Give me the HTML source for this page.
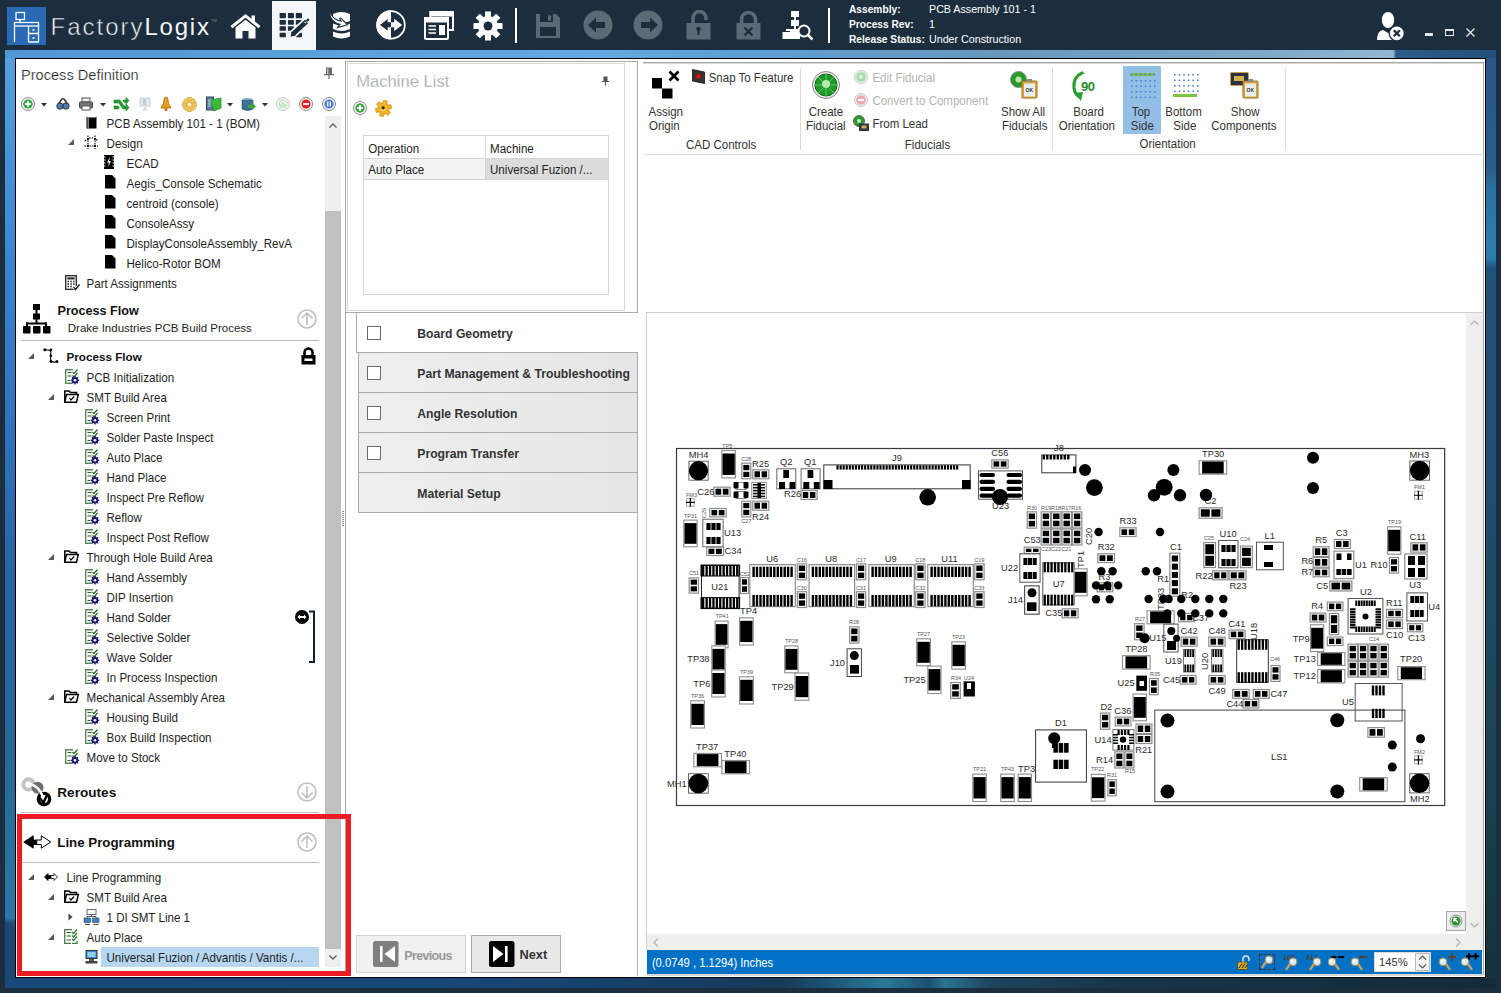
<!DOCTYPE html>
<html><head><meta charset="utf-8">
<style>
*{margin:0;padding:0;box-sizing:border-box}
html,body{width:1501px;height:993px;overflow:hidden;background:#1c2e3d;font-family:"Liberation Sans",sans-serif;color:#1e1e1e}
.a{position:absolute}
.t{position:absolute;white-space:nowrap;line-height:1}
svg{position:absolute;overflow:visible}
</style></head><body>
<div class="a" style="left:5px;top:50px;width:1491px;height:938px;background:linear-gradient(180deg,#4f96d6 0%,#2f6eae 40%,#1c5288 70%,#174a7a 100%)"></div>
<div class="a" style="left:1100px;top:58px;width:396px;height:930px;background:linear-gradient(180deg,#28568a 0%,#2a5e90 12%,#2a72a0 14%,#2c80ae 21.5%,#20527e 22.6%,#1f4e74 45%,#1c4a60 60%,#1a4453 75%,#163a47 88%,#15323e 100%)"></div>
<div class="a" style="left:5px;top:58px;width:10px;height:930px;background:linear-gradient(180deg,#55a0e0 0%,#3b84d2 22%,#2f72bc 40%,#2a64a8 55%,#276898 75%,#2a76a6 92.5%,#1b4a74 93%,#184670 100%)"></div>
<div class="a" style="left:5px;top:50px;width:1491px;height:8px;background:linear-gradient(90deg,#4f96d6 0%,#62aadf 40%,#5c9ed4 50%,#6898bc 67%,#80a8c8 85%,#92b8d4 93.1%,#2e5c88 93.3%,#24507a 100%)"></div>
<div class="a" style="left:5px;top:978px;width:1491px;height:10px;background:linear-gradient(90deg,#184b7b 0%,#174676 33%,#163a5a 52%,#1c5272 55%,#2a7898 59%,#1c5070 62%,#2a7494 63%,#1d4660 66%,#163448 75%,#132b3a 100%)"></div>
<div class="a" style="left:15px;top:58px;width:1471px;height:920px;border:1px solid #000;background:#fff"></div>
<!-- TOP BAR -->
<div class="a" style="left:7px;top:7px;width:39px;height:38px;background:#2a6ab5"></div>
<svg style="left:7px;top:7px" width="39" height="38" viewBox="0 0 39 38" fill="none" stroke="#fff" stroke-width="1.3">
<rect x="9" y="5.5" width="8.5" height="7"/><path d="M13 12.5v3"/><rect x="7.5" y="15.5" width="24" height="3.5"/>
<path d="M7.5 19v16M31.5 19v16M21.5 19v16M21.5 26.5h10M21.5 35h10"/><path d="M25.5 23h2M25.5 31h2"/></svg>
<svg style="left:50px;top:8px" width="170" height="34" viewBox="0 0 170 34" font-family="Liberation Sans, sans-serif" font-size="24">
<text x="0.6" y="27.2" letter-spacing="2" fill="#f0f3f6" stroke="#1c2e3d" stroke-width="0.55">Factory</text>
<text x="94.4" y="27.2" letter-spacing="1.8" fill="#f4f6f8">Logix</text></svg>
<div class="t" style="left:211px;top:19px;font-size:4px;color:#889">TM</div>
<!-- home -->
<svg style="left:230px;top:13px" width="31" height="26" viewBox="0 0 31 26"><path fill="#fff" d="M15.5 1 L0.5 13 L2.5 15.2 L15.5 4.8 L28.5 15.2 L30.5 13 L25 8.6 V2.5 H21.5 V5.8 Z M5.5 14.5 V25.5 H12.5 V18 H18.5 V25.5 H25.5 V14.5 L15.5 6.8 Z"/></svg>
<!-- selected grid -->
<div class="a" style="left:272px;top:1px;width:44px;height:49px;background:#f4f6f9"></div>
<svg style="left:279px;top:12px" width="31" height="27" viewBox="0 0 31 27"><g fill="#1c2e3d">
<rect x="0.6" y="0.9" width="6.3" height="5.3" rx="0.6"/><rect x="8.9" y="0.9" width="6" height="5.3" rx="0.6"/><rect x="16.8" y="0.9" width="6.2" height="5.3" rx="0.6"/>
<rect x="0.6" y="8.1" width="6.3" height="4.6" rx="0.6"/><rect x="8.9" y="8.1" width="6" height="4.6" rx="0.6"/><rect x="16.8" y="8.1" width="6.2" height="4.6" rx="0.6"/>
<rect x="0.6" y="14.3" width="6.3" height="4.5" rx="0.6"/><rect x="8.9" y="14.3" width="6" height="4.5" rx="0.6"/>
<rect x="0.6" y="20.8" width="6.3" height="4.4" rx="0.6"/><rect x="8.9" y="20.8" width="6" height="4.4" rx="0.6"/><rect x="16.8" y="20.8" width="6.2" height="4.4" rx="0.6"/></g>
<path d="M12 24 L28.8 8.2" stroke="#f4f6f9" stroke-width="8" stroke-linecap="round"/>
<path d="M13.5 22.5 L27.5 9.5" stroke="#1c2e3d" stroke-width="4.6"/>
<path d="M11.5 24.8 L12.8 19.5 L16.8 23.3 Z" fill="#1c2e3d"/>
<path d="M25.6 11.2 L27 9.8" stroke="#f4f6f9" stroke-width="1.2" transform="rotate(90 26.3 10.5)"/>
<path d="M26.8 8.5 L28.5 6.8 Q29.6 6.2 30.2 7.2 L30.3 8 L28.6 9.8Z" fill="#1c2e3d"/></svg>
<!-- db -->
<svg style="left:329px;top:11px" width="25" height="29" viewBox="0 0 25 29"><g fill="#fff">
<path d="M4 3 Q12.5 -1 21 3 V10 Q12.5 14 4 10 Z"/><path d="M4 12.5 Q12.5 16.5 21 12.5 V18 Q12.5 22 4 18 Z"/><path d="M4 20.5 Q12.5 24.5 21 20.5 V25.5 Q12.5 29.5 4 25.5 Z"/></g>
<path d="M1 2 Q3 9 13 11 L11 7 L17.5 13.5 L10 15.5 L12 13 Q2 11 1 2Z" fill="#1c2e3d" stroke="#1c2e3d" stroke-width="2.2"/>
<path d="M1 2 Q3 9 13 11 L11 7 L17.5 13.5 L10 15.5 L12 13 Q2 11 1 2Z" fill="#fff"/></svg>
<!-- circle arrows -->
<svg style="left:376px;top:10px" width="30" height="30" viewBox="0 0 30 30">
<circle cx="15" cy="14.9" r="13.8" fill="#1c2e3d" stroke="#fff" stroke-width="1.8"/>
<path d="M15 0.2 A14.7 14.7 0 0 0 15 29.6 Z" fill="#fff"/>
<path d="M4 14.9 L11.7 8.9 V12.3 H15 V17.2 H11.7 V20.8 Z" fill="#1c2e3d"/>
<path d="M26.2 14.9 L18.2 8.7 V12.3 H15 V17.2 H18.2 V21 Z" fill="#fff"/></svg>
<!-- windows -->
<svg style="left:424px;top:10px" width="31" height="30" viewBox="0 0 31 30" fill="none" stroke="#fff" stroke-width="2">
<path d="M6.5 7 V2 H29 V20 H25" /><path d="M6.5 2 H29 V5.5 H6.5Z" fill="#fff"/>
<rect x="1" y="8" width="23" height="21" rx="1"/><path d="M1 8 H24 V11.5 H1Z" fill="#fff"/>
<path d="M4.5 16 H12 M4.5 19.5 H12 M4.5 23 H12" stroke-width="1.6"/><rect x="15" y="15" width="6" height="10" fill="#fff" stroke="none"/></svg>
<!-- gear -->
<svg style="left:473px;top:11px" width="30" height="30" viewBox="0 0 30 30"><g fill="#fff" transform="translate(15 15)">
<circle r="10"/><g id="teeth"><rect x="-3" y="-14.5" width="6" height="6"/><rect x="-3" y="8.5" width="6" height="6"/><rect x="-14.5" y="-3" width="6" height="6"/><rect x="8.5" y="-3" width="6" height="6"/></g>
<g transform="rotate(45)"><rect x="-3" y="-14.5" width="6" height="6"/><rect x="-3" y="8.5" width="6" height="6"/><rect x="-14.5" y="-3" width="6" height="6"/><rect x="8.5" y="-3" width="6" height="6"/></g>
<circle r="4.5" fill="#1c2e3d"/></g></svg>
<div class="a" style="left:515px;top:8px;width:2px;height:35px;background:#fff"></div>
<!-- save -->
<svg style="left:535px;top:13px" width="26" height="26" viewBox="0 0 26 26"><path fill="#5a6b77" d="M1 1 H21 L25 5 V25 H1Z"/><rect x="5" y="1" width="13" height="8" fill="#1c2e3d"/><rect x="13" y="2.5" width="3" height="5" fill="#5a6b77"/><rect x="5" y="14" width="16" height="9" fill="#1c2e3d"/></svg>
<!-- back/fwd -->
<svg style="left:583px;top:10px" width="30" height="30" viewBox="0 0 30 30"><circle cx="15" cy="15" r="14.5" fill="#5a6b77"/><path fill="#1c2e3d" d="M5 15 L13 7.5 V12 H22 V18 H13 V22.5Z"/></svg>
<svg style="left:633px;top:10px" width="30" height="30" viewBox="0 0 30 30"><circle cx="15" cy="15" r="14.5" fill="#5a6b77"/><path fill="#1c2e3d" d="M25 15 L17 7.5 V12 H8 V18 H17 V22.5Z"/></svg>
<!-- unlock -->
<svg style="left:686px;top:10px" width="25" height="30" viewBox="0 0 25 30"><path d="M7 14 V8 A6.5 6.5 0 0 1 20 8 V10" fill="none" stroke="#5a6b77" stroke-width="3.5"/><rect x="0.5" y="13" width="24" height="16.5" fill="#5a6b77"/><circle cx="12.5" cy="19" r="2.3" fill="#1c2e3d"/><rect x="11.5" y="19" width="2" height="6" fill="#1c2e3d"/></svg>
<!-- lock x -->
<svg style="left:736px;top:10px" width="25" height="30" viewBox="0 0 25 30"><path d="M5.5 14 V9.5 A7 7 0 0 1 19.5 9.5 V14" fill="none" stroke="#5a6b77" stroke-width="3.5"/><rect x="0.5" y="13" width="24" height="16.5" fill="#5a6b77"/><path d="M8.5 17.5 L16.5 25.5 M16.5 17.5 L8.5 25.5" stroke="#1c2e3d" stroke-width="2.4"/></svg>
<!-- hierarchy search -->
<svg style="left:782px;top:10px" width="32" height="31" viewBox="0 0 32 31"><g fill="#fff"><rect x="9" y="1" width="8" height="6"/><rect x="12" y="7" width="2" height="3"/><rect x="9" y="10" width="8" height="6"/><rect x="12" y="16" width="2" height="3"/>
<rect x="0.5" y="22" width="8" height="7"/><rect x="8" y="19" width="10" height="10"/><rect x="4" y="19" width="12" height="2"/></g>
<circle cx="22" cy="21" r="5.5" fill="#1c2e3d" stroke="#fff" stroke-width="2"/><path d="M26 25 L30.5 29.5" stroke="#fff" stroke-width="2.5"/></svg>
<div class="a" style="left:828px;top:8px;width:2px;height:35px;background:#fff"></div>
<!-- assembly info -->
<div class="t" style="left:849px;top:1.6px;font-size:10.2px;font-weight:bold;color:#fff;line-height:15.25px">Assembly:<br>Process Rev:<br>Release Status:</div>
<div class="t" style="left:929px;top:1.6px;font-size:10.7px;color:#fff;line-height:15.25px">PCB Assembly 101 - 1<br>1<br>Under Construction</div>
<!-- user -->
<svg style="left:1377px;top:12px" width="28" height="29" viewBox="0 0 28 29"><g fill="#fff"><ellipse cx="11" cy="8" rx="6.2" ry="8"/><path d="M0 28 Q0 19 6 18 L11 21 L16 18 Q20 19 21 23 L21 28Z"/></g>
<circle cx="19.8" cy="21.3" r="7.6" fill="#fff" stroke="#1c2e3d" stroke-width="1.4"/><path d="M16.8 18.3 L22.8 24.3 M22.8 18.3 L16.8 24.3" stroke="#1c2e3d" stroke-width="2.3"/></svg>
<div class="a" style="left:1425px;top:33px;width:8px;height:3px;background:#e8e8e8"></div>
<div class="a" style="left:1445px;top:29px;width:9px;height:7px;border:1.3px solid #e8e8e8;border-top-width:2px"></div>
<svg style="left:1466px;top:28px" width="9" height="9" viewBox="0 0 9 9"><path d="M0.5 0.5 L8.5 8.5 M8.5 0.5 L0.5 8.5" stroke="#e8e8e8" stroke-width="1.3"/></svg>

<svg style="left:20px;top:64px" width="130" height="22" viewBox="0 0 130 22"><text x="1" y="16.2" font-size="14.6" font-family="Liberation Sans, sans-serif" fill="#2a2a2a" stroke="#fff" stroke-width="0.2">Process Definition</text></svg>
<svg style="left:324px;top:67px" width="10" height="12" viewBox="0 0 10 12"><path d="M2 0.5 H8 V7 H10 V8.2 H5.6 V12 H4.4 V8.2 H0 V7 H2 Z" fill="#6b6b6b"/><rect x="3.3" y="1.5" width="1" height="5.5" fill="#ddd"/></svg>
<svg style="left:21px;top:97px" width="14" height="14" viewBox="0 0 14 14"><circle cx="7" cy="7" r="6.5" fill="#f4f4f4" stroke="#8a8a8a" stroke-width="1"/><circle cx="7" cy="7" r="4.6" fill="#2eaa3a"/><path d="M7 4 V10 M4 7 H10" stroke="#fff" stroke-width="1.8"/></svg>
<svg style="left:41px;top:103px" width="7" height="4" viewBox="0 0 7 4"><path d="M0 0 H6 L3 3.5Z" fill="#333"/></svg>
<svg style="left:56px;top:98px" width="14" height="12" viewBox="0 0 14 12"><g fill="#4a80b0" stroke="#333" stroke-width="1"><ellipse cx="4" cy="8" rx="3.2" ry="3.2"/><ellipse cx="10" cy="8" rx="3.2" ry="3.2"/></g><path d="M3 5 L6 1 H8 L11 5" fill="none" stroke="#333" stroke-width="1.5"/></svg>
<svg style="left:79px;top:97px" width="14" height="14" viewBox="0 0 14 14"><rect x="3" y="1" width="8" height="4" fill="#eee" stroke="#555"/><rect x="0.5" y="5" width="13" height="6" rx="1" fill="#777" stroke="#444"/><rect x="3" y="9" width="8" height="4" fill="#fff" stroke="#555"/></svg>
<svg style="left:100px;top:103px" width="7" height="4" viewBox="0 0 7 4"><path d="M0 0 H6 L3 3.5Z" fill="#333"/></svg>
<svg style="left:114px;top:97px" width="15" height="14" viewBox="0 0 15 14"><path d="M0 3 H6 L10 9 H12 V7 L15 10.5 L12 14 V12 H9 L5 6 H0Z M0 9 H4 L5.5 11 L4 12 H0Z M9 3 H12 V0.5 L15 3.5 L12 7 V5.5 H10Z" fill="#22a030" stroke="#167a20" stroke-width="0.6"/></svg>
<svg style="left:139px;top:97px" width="12" height="15" viewBox="0 0 12 15"><rect x="1" y="1" width="10" height="8" fill="#e2e8ee" stroke="#c8d0d8"/><rect x="4" y="2" width="3" height="6" fill="#c0cad4"/><path d="M6 9 V14 M3 14 L6 11 L9 14" stroke="#ccc" fill="none"/></svg>
<svg style="left:160px;top:96px" width="12" height="16" viewBox="0 0 12 16"><path d="M6 1 Q8 1 8 4 Q8 8 10 10 L11 12 H1 L2 10 Q4 8 4 4 Q4 1 6 1Z" fill="#e8a020" stroke="#a86010" stroke-width="0.8"/><circle cx="6" cy="13.5" r="1.5" fill="#c07010"/></svg>
<svg style="left:182px;top:97px" width="15" height="15" viewBox="0 0 15 15"><g transform="translate(7.5 7.5)" fill="#f0c860" stroke="#d8a840" stroke-width="0.8"><circle r="5"/><rect x="-1.8" y="-7" width="3.6" height="14"/><rect x="-7" y="-1.8" width="14" height="3.6"/><rect x="-1.8" y="-7" width="3.6" height="14" transform="rotate(45)"/><rect x="-1.8" y="-7" width="3.6" height="14" transform="rotate(-45)"/><circle r="2.2" fill="#fff5d0"/></g></svg>
<svg style="left:206px;top:96px" width="16" height="16" viewBox="0 0 16 16"><rect x="0.5" y="1" width="7" height="13" fill="#5a7a9a" stroke="#345"/><path d="M4 4 L15 2 V12 L8 15 Z" fill="#3cb83c" stroke="#2a8a2a" stroke-width="0.8"/><rect x="2" y="3" width="3" height="8" fill="#8ab"/></svg>
<svg style="left:227px;top:103px" width="7" height="4" viewBox="0 0 7 4"><path d="M0 0 H6 L3 3.5Z" fill="#333"/></svg>
<svg style="left:241px;top:97px" width="15" height="15" viewBox="0 0 15 15"><ellipse cx="6.5" cy="3" rx="5.5" ry="2" fill="#7aa6c8"/><path d="M1 3 V12 Q6.5 15 12 12 V3" fill="#3f6e96" stroke="#2a4a6a" stroke-width="0.6"/><path d="M7 8 H11 V5.5 L15 9.5 L11 13 V11 H7Z" fill="#3aa83a"/></svg>
<svg style="left:262px;top:103px" width="7" height="4" viewBox="0 0 7 4"><path d="M0 0 H6 L3 3.5Z" fill="#333"/></svg>
<svg style="left:276px;top:97px" width="14" height="14" viewBox="0 0 14 14"><circle cx="7" cy="7" r="6.5" fill="#f4f4f4" stroke="#c8c8c8" stroke-width="1"/><circle cx="7" cy="7" r="4.6" fill="#c8e8c8"/><path d="M4.5 7 A2.5 2.5 0 0 1 9.5 7" fill="none" stroke="#fff" stroke-width="1.2"/></svg>
<svg style="left:299px;top:97px" width="14" height="14" viewBox="0 0 14 14"><circle cx="7" cy="7" r="6.5" fill="#f4f4f4" stroke="#8a8a8a" stroke-width="1"/><circle cx="7" cy="7" r="4.6" fill="#e02030"/><path d="M4 7 H10" stroke="#fff" stroke-width="1.8"/></svg>
<svg style="left:322px;top:97px" width="14" height="14" viewBox="0 0 14 14"><circle cx="7" cy="7" r="6.5" fill="#f4f4f4" stroke="#8a8a8a" stroke-width="1"/><circle cx="7" cy="7" r="4.6" fill="#4a7ad8"/><path d="M5.7 4.5 V9.5 M8.3 4.5 V9.5" stroke="#fff" stroke-width="1.3"/></svg>
<div class="a" style="left:325px;top:116px;width:16px;height:851px;background:#efefef"></div>
<div class="a" style="left:325px;top:211px;width:16px;height:738px;background:#c0c0c0"></div>
<svg style="left:329px;top:123px" width="8" height="5" viewBox="0 0 8 5"><path d="M0.5 4.5 L4 1 L7.5 4.5" fill="none" stroke="#606060" stroke-width="1.3"/></svg>
<svg style="left:329px;top:955px" width="8" height="5" viewBox="0 0 8 5"><path d="M0.5 0.5 L4 4 L7.5 0.5" fill="none" stroke="#606060" stroke-width="1.3"/></svg>
<svg style="left:86px;top:116px" width="11" height="13" viewBox="0 0 11 13"><path d="M0.5 0.5 L1.5 1.5 H9.5 L10.5 0.5 V12.5 H0.5Z" fill="#000"/><rect x="1.7" y="2" width="0.8" height="10" fill="#fff"/></svg>
<div class="t" style="left:106.6px;top:117.78px;font-size:11.6px;color:#1e1e1e;transform:scaleY(1.08);transform-origin:0 9.82px;">PCB Assembly 101 - 1 (BOM)</div>
<svg style="left:68px;top:139px" width="6" height="6" viewBox="0 0 6 6"><path d="M6 0 V6 H0 Z" fill="#595959"/></svg>
<svg style="left:84px;top:135px" width="14" height="14" viewBox="0 0 14 14"><g stroke="#000" stroke-width="1.1" stroke-dasharray="1.6 0.9" fill="none"><path d="M4 0.5 V14 M11 0.5 V14 M0.5 11 H14"/><path d="M1 6 Q7.5 -0.5 14 6"/></g><g fill="#000"><circle cx="4" cy="4" r="1"/><circle cx="11" cy="4" r="1"/><circle cx="4" cy="11" r="1.1"/><circle cx="11" cy="11" r="1.1"/></g></svg>
<div class="t" style="left:106.6px;top:137.78px;font-size:11.6px;color:#1e1e1e;transform:scaleY(1.08);transform-origin:0 9.82px;">Design</div>
<svg style="left:104px;top:155px" width="10" height="14" viewBox="0 0 10 14"><path d="M0 0 H10 V14 H0Z" fill="#000"/><path d="M0 2 H1.5 M0 5 H1.5 M0 8 H1.5 M0 11 H1.5 M8.5 2 H10 M8.5 5 H10 M8.5 8 H10 M8.5 11 H10" stroke="#fff" stroke-width="1"/><path d="M6 2 L3 7.5 H5 L4 12 L7 6 H5Z" fill="#fff"/></svg>
<div class="t" style="left:126.5px;top:157.78px;font-size:11.6px;color:#1e1e1e;transform:scaleY(1.08);transform-origin:0 9.82px;">ECAD</div>
<svg style="left:105px;top:175px" width="11" height="14" viewBox="0 0 11 14"><path d="M0 0 H7 L10.5 3.5 V13.5 H0 Z" fill="#000"/></svg>
<div class="t" style="left:126.5px;top:177.78px;font-size:11.6px;color:#1e1e1e;transform:scaleY(1.08);transform-origin:0 9.82px;">Aegis_Console Schematic</div>
<svg style="left:105px;top:195px" width="11" height="14" viewBox="0 0 11 14"><path d="M0 0 H7 L10.5 3.5 V13.5 H0 Z" fill="#000"/></svg>
<div class="t" style="left:126.5px;top:197.78px;font-size:11.6px;color:#1e1e1e;transform:scaleY(1.08);transform-origin:0 9.82px;">centroid (console)</div>
<svg style="left:105px;top:215px" width="11" height="14" viewBox="0 0 11 14"><path d="M0 0 H7 L10.5 3.5 V13.5 H0 Z" fill="#000"/></svg>
<div class="t" style="left:126.5px;top:217.78px;font-size:11.6px;color:#1e1e1e;transform:scaleY(1.08);transform-origin:0 9.82px;">ConsoleAssy</div>
<svg style="left:105px;top:235px" width="11" height="14" viewBox="0 0 11 14"><path d="M0 0 H7 L10.5 3.5 V13.5 H0 Z" fill="#000"/></svg>
<div class="t" style="left:126.5px;top:237.78px;font-size:11.6px;color:#1e1e1e;transform:scaleY(1.08);transform-origin:0 9.82px;">DisplayConsoleAssembly_RevA</div>
<svg style="left:105px;top:255px" width="11" height="14" viewBox="0 0 11 14"><path d="M0 0 H7 L10.5 3.5 V13.5 H0 Z" fill="#000"/></svg>
<div class="t" style="left:126.5px;top:257.78px;font-size:11.6px;color:#1e1e1e;transform:scaleY(1.08);transform-origin:0 9.82px;">Helico-Rotor BOM</div>
<svg style="left:65px;top:275px" width="15" height="16" viewBox="0 0 15 16"><rect x="0.7" y="0.7" width="10.6" height="13.6" fill="#fff" stroke="#222" stroke-width="1.3"/><rect x="2.3" y="2.3" width="7.4" height="2.2" fill="#333"/><path d="M2.5 6.5 H4 M5.3 6.5 H6.8 M8 6.5 H9.5 M2.5 9 H4 M5.3 9 H6.8 M8 9 H9.5 M2.5 11.5 H4 M5.3 11.5 H6.8" stroke="#222" stroke-width="1.3"/><path d="M8.5 12 L10.5 14.5 L14.5 9.5" fill="none" stroke="#fff" stroke-width="3"/><path d="M8.5 12 L10.5 14.5 L14.5 9.5" fill="none" stroke="#222" stroke-width="1.5"/></svg>
<div class="t" style="left:86.5px;top:277.78px;font-size:11.6px;color:#1e1e1e;transform:scaleY(1.08);transform-origin:0 9.82px;">Part Assignments</div>
<svg style="left:23px;top:304px" width="28" height="30" viewBox="0 0 28 30"><g fill="#000"><rect x="10" y="0" width="7" height="6"/><rect x="10" y="9.5" width="7" height="6"/><rect x="12.5" y="5" width="2" height="5"/><rect x="12.5" y="15" width="2" height="4"/><rect x="3" y="18.5" width="21" height="2"/><rect x="3" y="18.5" width="2" height="4"/><rect x="22" y="18.5" width="2" height="4"/><rect x="0" y="22" width="7.5" height="7.5" rx="0.8"/><rect x="10" y="22" width="7.5" height="7.5" rx="0.8"/><rect x="20" y="22" width="7.5" height="7.5" rx="0.8"/></g></svg>
<div class="t" style="left:57.5px;top:305.13px;font-size:12.6px;font-weight:bold;color:#111;">Process Flow</div>
<div class="t" style="left:67.8px;top:322.87px;font-size:11.5px;color:#1e1e1e;">Drake Industries PCB Build Process</div>
<svg style="left:297px;top:309px" width="20" height="20" viewBox="0 0 20 20"><circle cx="10" cy="10" r="9" fill="none" stroke="#bdbdbd" stroke-width="1.5"/><path d="M10 16 V4 M4.5 9.5 L10 4 L15.5 9.5" fill="none" stroke="#bdbdbd" stroke-width="1.5"/></svg>
<div class="a" style="left:21px;top:340px;width:298px;height:1px;background:#bcbcbc"></div>
<svg style="left:28px;top:353px" width="6" height="6" viewBox="0 0 6 6"><path d="M6 0 V6 H0 Z" fill="#595959"/></svg>
<svg style="left:43px;top:348px" width="16" height="16" viewBox="0 0 16 16"><path d="M1.8 1.8 Q6 1.2 7.9 3.5 Q7 8 7.9 13.2 Q10.5 14.8 13.9 13.5" fill="none" stroke="#000" stroke-width="1.1"/><circle cx="1.8" cy="1.8" r="1.5"/><circle cx="7.9" cy="1.9" r="1.3"/><circle cx="7.9" cy="7.8" r="1.3"/><circle cx="7.9" cy="13.5" r="1.4"/><circle cx="13.9" cy="13.5" r="1.5"/></svg>
<div class="t" style="left:66.5px;top:350.90px;font-size:11.7px;font-weight:bold;color:#111;">Process Flow</div>
<svg style="left:301px;top:347px" width="15" height="18" viewBox="0 0 15 18"><path d="M3.5 8 V5.5 A4 4 0 0 1 11.5 5.5 V8" fill="none" stroke="#000" stroke-width="2.6"/><rect x="0.5" y="8" width="14" height="9.5" fill="#000"/><rect x="3.5" y="11.5" width="8" height="2.5" fill="#fff"/></svg>
<svg style="left:65px;top:369px" width="14" height="15" viewBox="0 0 14 15"><path d="M8 0.7 H0.7 V14.3 H7" fill="none" stroke="#5b8a5b" stroke-width="1.4"/><path d="M2.5 3.5 H6.5 M2.5 7 H6.5 M2.5 11.5 H5" stroke="#2e5e2e" stroke-width="1.1"/><path d="M7.5 3 L9 4.5 L12.5 0.5 M7.5 6.5 L9 8 L12.5 4" fill="none" stroke="#2e6e2e" stroke-width="1.3"/><circle cx="10" cy="11.3" r="3.3" fill="#1a1a70"/><circle cx="10" cy="11.3" r="1.4" fill="#fff"/><path d="M10 7 V15.6 M5.7 11.3 H14.3 M7 8.3 L13 14.3 M13 8.3 L7 14.3" stroke="#1a1a70" stroke-width="1.3"/><circle cx="10" cy="11.3" r="1.3" fill="#fff"/></svg>
<div class="t" style="left:86.5px;top:372.38px;font-size:11.6px;color:#1e1e1e;transform:scaleY(1.08);transform-origin:0 9.82px;">PCB Initialization</div>
<svg style="left:48px;top:394px" width="6" height="6" viewBox="0 0 6 6"><path d="M6 0 V6 H0 Z" fill="#595959"/></svg>
<svg style="left:64px;top:390px" width="15" height="13" viewBox="0 0 15 13"><path d="M0.8 12.2 V1 H5 L6.5 2.5 H12.5 V4.5" fill="none" stroke="#000" stroke-width="1.5"/><path d="M0.8 12.2 L2.5 4.5 H14.3 L12.5 12.2 Z" fill="#fff" stroke="#000" stroke-width="1.5"/><path d="M5.5 8 L7 10 L10 6.5" fill="none" stroke="#000" stroke-width="1.2"/></svg>
<div class="t" style="left:86.5px;top:392.38px;font-size:11.6px;color:#1e1e1e;transform:scaleY(1.08);transform-origin:0 9.82px;">SMT Build Area</div>
<svg style="left:85px;top:409px" width="14" height="15" viewBox="0 0 14 15"><path d="M8 0.7 H0.7 V14.3 H7" fill="none" stroke="#5b8a5b" stroke-width="1.4"/><path d="M2.5 3.5 H6.5 M2.5 7 H6.5 M2.5 11.5 H5" stroke="#2e5e2e" stroke-width="1.1"/><path d="M7.5 3 L9 4.5 L12.5 0.5 M7.5 6.5 L9 8 L12.5 4" fill="none" stroke="#2e6e2e" stroke-width="1.3"/><circle cx="10" cy="11.3" r="3.3" fill="#1a1a70"/><circle cx="10" cy="11.3" r="1.4" fill="#fff"/><path d="M10 7 V15.6 M5.7 11.3 H14.3 M7 8.3 L13 14.3 M13 8.3 L7 14.3" stroke="#1a1a70" stroke-width="1.3"/><circle cx="10" cy="11.3" r="1.3" fill="#fff"/></svg>
<div class="t" style="left:106.5px;top:412.38px;font-size:11.6px;color:#1e1e1e;transform:scaleY(1.08);transform-origin:0 9.82px;">Screen Print</div>
<svg style="left:85px;top:429px" width="14" height="15" viewBox="0 0 14 15"><path d="M8 0.7 H0.7 V14.3 H7" fill="none" stroke="#5b8a5b" stroke-width="1.4"/><path d="M2.5 3.5 H6.5 M2.5 7 H6.5 M2.5 11.5 H5" stroke="#2e5e2e" stroke-width="1.1"/><path d="M7.5 3 L9 4.5 L12.5 0.5 M7.5 6.5 L9 8 L12.5 4" fill="none" stroke="#2e6e2e" stroke-width="1.3"/><circle cx="10" cy="11.3" r="3.3" fill="#1a1a70"/><circle cx="10" cy="11.3" r="1.4" fill="#fff"/><path d="M10 7 V15.6 M5.7 11.3 H14.3 M7 8.3 L13 14.3 M13 8.3 L7 14.3" stroke="#1a1a70" stroke-width="1.3"/><circle cx="10" cy="11.3" r="1.3" fill="#fff"/></svg>
<div class="t" style="left:106.5px;top:432.38px;font-size:11.6px;color:#1e1e1e;transform:scaleY(1.08);transform-origin:0 9.82px;">Solder Paste Inspect</div>
<svg style="left:85px;top:449px" width="14" height="15" viewBox="0 0 14 15"><path d="M8 0.7 H0.7 V14.3 H7" fill="none" stroke="#5b8a5b" stroke-width="1.4"/><path d="M2.5 3.5 H6.5 M2.5 7 H6.5 M2.5 11.5 H5" stroke="#2e5e2e" stroke-width="1.1"/><path d="M7.5 3 L9 4.5 L12.5 0.5 M7.5 6.5 L9 8 L12.5 4" fill="none" stroke="#2e6e2e" stroke-width="1.3"/><circle cx="10" cy="11.3" r="3.3" fill="#1a1a70"/><circle cx="10" cy="11.3" r="1.4" fill="#fff"/><path d="M10 7 V15.6 M5.7 11.3 H14.3 M7 8.3 L13 14.3 M13 8.3 L7 14.3" stroke="#1a1a70" stroke-width="1.3"/><circle cx="10" cy="11.3" r="1.3" fill="#fff"/></svg>
<div class="t" style="left:106.5px;top:452.38px;font-size:11.6px;color:#1e1e1e;transform:scaleY(1.08);transform-origin:0 9.82px;">Auto Place</div>
<svg style="left:85px;top:469px" width="14" height="15" viewBox="0 0 14 15"><path d="M8 0.7 H0.7 V14.3 H7" fill="none" stroke="#5b8a5b" stroke-width="1.4"/><path d="M2.5 3.5 H6.5 M2.5 7 H6.5 M2.5 11.5 H5" stroke="#2e5e2e" stroke-width="1.1"/><path d="M7.5 3 L9 4.5 L12.5 0.5 M7.5 6.5 L9 8 L12.5 4" fill="none" stroke="#2e6e2e" stroke-width="1.3"/><circle cx="10" cy="11.3" r="3.3" fill="#1a1a70"/><circle cx="10" cy="11.3" r="1.4" fill="#fff"/><path d="M10 7 V15.6 M5.7 11.3 H14.3 M7 8.3 L13 14.3 M13 8.3 L7 14.3" stroke="#1a1a70" stroke-width="1.3"/><circle cx="10" cy="11.3" r="1.3" fill="#fff"/></svg>
<div class="t" style="left:106.5px;top:472.38px;font-size:11.6px;color:#1e1e1e;transform:scaleY(1.08);transform-origin:0 9.82px;">Hand Place</div>
<svg style="left:85px;top:489px" width="14" height="15" viewBox="0 0 14 15"><path d="M8 0.7 H0.7 V14.3 H7" fill="none" stroke="#5b8a5b" stroke-width="1.4"/><path d="M2.5 3.5 H6.5 M2.5 7 H6.5 M2.5 11.5 H5" stroke="#2e5e2e" stroke-width="1.1"/><path d="M7.5 3 L9 4.5 L12.5 0.5 M7.5 6.5 L9 8 L12.5 4" fill="none" stroke="#2e6e2e" stroke-width="1.3"/><circle cx="10" cy="11.3" r="3.3" fill="#1a1a70"/><circle cx="10" cy="11.3" r="1.4" fill="#fff"/><path d="M10 7 V15.6 M5.7 11.3 H14.3 M7 8.3 L13 14.3 M13 8.3 L7 14.3" stroke="#1a1a70" stroke-width="1.3"/><circle cx="10" cy="11.3" r="1.3" fill="#fff"/></svg>
<div class="t" style="left:106.5px;top:492.38px;font-size:11.6px;color:#1e1e1e;transform:scaleY(1.08);transform-origin:0 9.82px;">Inspect Pre Reflow</div>
<svg style="left:85px;top:509px" width="14" height="15" viewBox="0 0 14 15"><path d="M8 0.7 H0.7 V14.3 H7" fill="none" stroke="#5b8a5b" stroke-width="1.4"/><path d="M2.5 3.5 H6.5 M2.5 7 H6.5 M2.5 11.5 H5" stroke="#2e5e2e" stroke-width="1.1"/><path d="M7.5 3 L9 4.5 L12.5 0.5 M7.5 6.5 L9 8 L12.5 4" fill="none" stroke="#2e6e2e" stroke-width="1.3"/><circle cx="10" cy="11.3" r="3.3" fill="#1a1a70"/><circle cx="10" cy="11.3" r="1.4" fill="#fff"/><path d="M10 7 V15.6 M5.7 11.3 H14.3 M7 8.3 L13 14.3 M13 8.3 L7 14.3" stroke="#1a1a70" stroke-width="1.3"/><circle cx="10" cy="11.3" r="1.3" fill="#fff"/></svg>
<div class="t" style="left:106.5px;top:512.38px;font-size:11.6px;color:#1e1e1e;transform:scaleY(1.08);transform-origin:0 9.82px;">Reflow</div>
<svg style="left:85px;top:529px" width="14" height="15" viewBox="0 0 14 15"><path d="M8 0.7 H0.7 V14.3 H7" fill="none" stroke="#5b8a5b" stroke-width="1.4"/><path d="M2.5 3.5 H6.5 M2.5 7 H6.5 M2.5 11.5 H5" stroke="#2e5e2e" stroke-width="1.1"/><path d="M7.5 3 L9 4.5 L12.5 0.5 M7.5 6.5 L9 8 L12.5 4" fill="none" stroke="#2e6e2e" stroke-width="1.3"/><circle cx="10" cy="11.3" r="3.3" fill="#1a1a70"/><circle cx="10" cy="11.3" r="1.4" fill="#fff"/><path d="M10 7 V15.6 M5.7 11.3 H14.3 M7 8.3 L13 14.3 M13 8.3 L7 14.3" stroke="#1a1a70" stroke-width="1.3"/><circle cx="10" cy="11.3" r="1.3" fill="#fff"/></svg>
<div class="t" style="left:106.5px;top:532.38px;font-size:11.6px;color:#1e1e1e;transform:scaleY(1.08);transform-origin:0 9.82px;">Inspect Post Reflow</div>
<svg style="left:48px;top:554px" width="6" height="6" viewBox="0 0 6 6"><path d="M6 0 V6 H0 Z" fill="#595959"/></svg>
<svg style="left:64px;top:550px" width="15" height="13" viewBox="0 0 15 13"><path d="M0.8 12.2 V1 H5 L6.5 2.5 H12.5 V4.5" fill="none" stroke="#000" stroke-width="1.5"/><path d="M0.8 12.2 L2.5 4.5 H14.3 L12.5 12.2 Z" fill="#fff" stroke="#000" stroke-width="1.5"/><path d="M5.5 8 L7 10 L10 6.5" fill="none" stroke="#000" stroke-width="1.2"/></svg>
<div class="t" style="left:86.5px;top:552.38px;font-size:11.6px;color:#1e1e1e;transform:scaleY(1.08);transform-origin:0 9.82px;">Through Hole Build Area</div>
<svg style="left:85px;top:569px" width="14" height="15" viewBox="0 0 14 15"><path d="M8 0.7 H0.7 V14.3 H7" fill="none" stroke="#5b8a5b" stroke-width="1.4"/><path d="M2.5 3.5 H6.5 M2.5 7 H6.5 M2.5 11.5 H5" stroke="#2e5e2e" stroke-width="1.1"/><path d="M7.5 3 L9 4.5 L12.5 0.5 M7.5 6.5 L9 8 L12.5 4" fill="none" stroke="#2e6e2e" stroke-width="1.3"/><circle cx="10" cy="11.3" r="3.3" fill="#1a1a70"/><circle cx="10" cy="11.3" r="1.4" fill="#fff"/><path d="M10 7 V15.6 M5.7 11.3 H14.3 M7 8.3 L13 14.3 M13 8.3 L7 14.3" stroke="#1a1a70" stroke-width="1.3"/><circle cx="10" cy="11.3" r="1.3" fill="#fff"/></svg>
<div class="t" style="left:106.5px;top:572.38px;font-size:11.6px;color:#1e1e1e;transform:scaleY(1.08);transform-origin:0 9.82px;">Hand Assembly</div>
<svg style="left:85px;top:589px" width="14" height="15" viewBox="0 0 14 15"><path d="M8 0.7 H0.7 V14.3 H7" fill="none" stroke="#5b8a5b" stroke-width="1.4"/><path d="M2.5 3.5 H6.5 M2.5 7 H6.5 M2.5 11.5 H5" stroke="#2e5e2e" stroke-width="1.1"/><path d="M7.5 3 L9 4.5 L12.5 0.5 M7.5 6.5 L9 8 L12.5 4" fill="none" stroke="#2e6e2e" stroke-width="1.3"/><circle cx="10" cy="11.3" r="3.3" fill="#1a1a70"/><circle cx="10" cy="11.3" r="1.4" fill="#fff"/><path d="M10 7 V15.6 M5.7 11.3 H14.3 M7 8.3 L13 14.3 M13 8.3 L7 14.3" stroke="#1a1a70" stroke-width="1.3"/><circle cx="10" cy="11.3" r="1.3" fill="#fff"/></svg>
<div class="t" style="left:106.5px;top:592.38px;font-size:11.6px;color:#1e1e1e;transform:scaleY(1.08);transform-origin:0 9.82px;">DIP Insertion</div>
<svg style="left:85px;top:609px" width="14" height="15" viewBox="0 0 14 15"><path d="M8 0.7 H0.7 V14.3 H7" fill="none" stroke="#5b8a5b" stroke-width="1.4"/><path d="M2.5 3.5 H6.5 M2.5 7 H6.5 M2.5 11.5 H5" stroke="#2e5e2e" stroke-width="1.1"/><path d="M7.5 3 L9 4.5 L12.5 0.5 M7.5 6.5 L9 8 L12.5 4" fill="none" stroke="#2e6e2e" stroke-width="1.3"/><circle cx="10" cy="11.3" r="3.3" fill="#1a1a70"/><circle cx="10" cy="11.3" r="1.4" fill="#fff"/><path d="M10 7 V15.6 M5.7 11.3 H14.3 M7 8.3 L13 14.3 M13 8.3 L7 14.3" stroke="#1a1a70" stroke-width="1.3"/><circle cx="10" cy="11.3" r="1.3" fill="#fff"/></svg>
<div class="t" style="left:106.5px;top:612.38px;font-size:11.6px;color:#1e1e1e;transform:scaleY(1.08);transform-origin:0 9.82px;">Hand Solder</div>
<svg style="left:85px;top:629px" width="14" height="15" viewBox="0 0 14 15"><path d="M8 0.7 H0.7 V14.3 H7" fill="none" stroke="#5b8a5b" stroke-width="1.4"/><path d="M2.5 3.5 H6.5 M2.5 7 H6.5 M2.5 11.5 H5" stroke="#2e5e2e" stroke-width="1.1"/><path d="M7.5 3 L9 4.5 L12.5 0.5 M7.5 6.5 L9 8 L12.5 4" fill="none" stroke="#2e6e2e" stroke-width="1.3"/><circle cx="10" cy="11.3" r="3.3" fill="#1a1a70"/><circle cx="10" cy="11.3" r="1.4" fill="#fff"/><path d="M10 7 V15.6 M5.7 11.3 H14.3 M7 8.3 L13 14.3 M13 8.3 L7 14.3" stroke="#1a1a70" stroke-width="1.3"/><circle cx="10" cy="11.3" r="1.3" fill="#fff"/></svg>
<div class="t" style="left:106.5px;top:632.38px;font-size:11.6px;color:#1e1e1e;transform:scaleY(1.08);transform-origin:0 9.82px;">Selective Solder</div>
<svg style="left:85px;top:649px" width="14" height="15" viewBox="0 0 14 15"><path d="M8 0.7 H0.7 V14.3 H7" fill="none" stroke="#5b8a5b" stroke-width="1.4"/><path d="M2.5 3.5 H6.5 M2.5 7 H6.5 M2.5 11.5 H5" stroke="#2e5e2e" stroke-width="1.1"/><path d="M7.5 3 L9 4.5 L12.5 0.5 M7.5 6.5 L9 8 L12.5 4" fill="none" stroke="#2e6e2e" stroke-width="1.3"/><circle cx="10" cy="11.3" r="3.3" fill="#1a1a70"/><circle cx="10" cy="11.3" r="1.4" fill="#fff"/><path d="M10 7 V15.6 M5.7 11.3 H14.3 M7 8.3 L13 14.3 M13 8.3 L7 14.3" stroke="#1a1a70" stroke-width="1.3"/><circle cx="10" cy="11.3" r="1.3" fill="#fff"/></svg>
<div class="t" style="left:106.5px;top:652.38px;font-size:11.6px;color:#1e1e1e;transform:scaleY(1.08);transform-origin:0 9.82px;">Wave Solder</div>
<svg style="left:85px;top:669px" width="14" height="15" viewBox="0 0 14 15"><path d="M8 0.7 H0.7 V14.3 H7" fill="none" stroke="#5b8a5b" stroke-width="1.4"/><path d="M2.5 3.5 H6.5 M2.5 7 H6.5 M2.5 11.5 H5" stroke="#2e5e2e" stroke-width="1.1"/><path d="M7.5 3 L9 4.5 L12.5 0.5 M7.5 6.5 L9 8 L12.5 4" fill="none" stroke="#2e6e2e" stroke-width="1.3"/><circle cx="10" cy="11.3" r="3.3" fill="#1a1a70"/><circle cx="10" cy="11.3" r="1.4" fill="#fff"/><path d="M10 7 V15.6 M5.7 11.3 H14.3 M7 8.3 L13 14.3 M13 8.3 L7 14.3" stroke="#1a1a70" stroke-width="1.3"/><circle cx="10" cy="11.3" r="1.3" fill="#fff"/></svg>
<div class="t" style="left:106.5px;top:672.38px;font-size:11.6px;color:#1e1e1e;transform:scaleY(1.08);transform-origin:0 9.82px;">In Process Inspection</div>
<svg style="left:48px;top:694px" width="6" height="6" viewBox="0 0 6 6"><path d="M6 0 V6 H0 Z" fill="#595959"/></svg>
<svg style="left:64px;top:690px" width="15" height="13" viewBox="0 0 15 13"><path d="M0.8 12.2 V1 H5 L6.5 2.5 H12.5 V4.5" fill="none" stroke="#000" stroke-width="1.5"/><path d="M0.8 12.2 L2.5 4.5 H14.3 L12.5 12.2 Z" fill="#fff" stroke="#000" stroke-width="1.5"/><path d="M5.5 8 L7 10 L10 6.5" fill="none" stroke="#000" stroke-width="1.2"/></svg>
<div class="t" style="left:86.5px;top:692.38px;font-size:11.6px;color:#1e1e1e;transform:scaleY(1.08);transform-origin:0 9.82px;">Mechanical Assembly Area</div>
<svg style="left:85px;top:709px" width="14" height="15" viewBox="0 0 14 15"><path d="M8 0.7 H0.7 V14.3 H7" fill="none" stroke="#5b8a5b" stroke-width="1.4"/><path d="M2.5 3.5 H6.5 M2.5 7 H6.5 M2.5 11.5 H5" stroke="#2e5e2e" stroke-width="1.1"/><path d="M7.5 3 L9 4.5 L12.5 0.5 M7.5 6.5 L9 8 L12.5 4" fill="none" stroke="#2e6e2e" stroke-width="1.3"/><circle cx="10" cy="11.3" r="3.3" fill="#1a1a70"/><circle cx="10" cy="11.3" r="1.4" fill="#fff"/><path d="M10 7 V15.6 M5.7 11.3 H14.3 M7 8.3 L13 14.3 M13 8.3 L7 14.3" stroke="#1a1a70" stroke-width="1.3"/><circle cx="10" cy="11.3" r="1.3" fill="#fff"/></svg>
<div class="t" style="left:106.5px;top:712.38px;font-size:11.6px;color:#1e1e1e;transform:scaleY(1.08);transform-origin:0 9.82px;">Housing Build</div>
<svg style="left:85px;top:729px" width="14" height="15" viewBox="0 0 14 15"><path d="M8 0.7 H0.7 V14.3 H7" fill="none" stroke="#5b8a5b" stroke-width="1.4"/><path d="M2.5 3.5 H6.5 M2.5 7 H6.5 M2.5 11.5 H5" stroke="#2e5e2e" stroke-width="1.1"/><path d="M7.5 3 L9 4.5 L12.5 0.5 M7.5 6.5 L9 8 L12.5 4" fill="none" stroke="#2e6e2e" stroke-width="1.3"/><circle cx="10" cy="11.3" r="3.3" fill="#1a1a70"/><circle cx="10" cy="11.3" r="1.4" fill="#fff"/><path d="M10 7 V15.6 M5.7 11.3 H14.3 M7 8.3 L13 14.3 M13 8.3 L7 14.3" stroke="#1a1a70" stroke-width="1.3"/><circle cx="10" cy="11.3" r="1.3" fill="#fff"/></svg>
<div class="t" style="left:106.5px;top:732.38px;font-size:11.6px;color:#1e1e1e;transform:scaleY(1.08);transform-origin:0 9.82px;">Box Build Inspection</div>
<svg style="left:65px;top:749px" width="14" height="15" viewBox="0 0 14 15"><path d="M8 0.7 H0.7 V14.3 H7" fill="none" stroke="#5b8a5b" stroke-width="1.4"/><path d="M2.5 3.5 H6.5 M2.5 7 H6.5 M2.5 11.5 H5" stroke="#2e5e2e" stroke-width="1.1"/><path d="M7.5 3 L9 4.5 L12.5 0.5 M7.5 6.5 L9 8 L12.5 4" fill="none" stroke="#2e6e2e" stroke-width="1.3"/><circle cx="10" cy="11.3" r="3.3" fill="#1a1a70"/><circle cx="10" cy="11.3" r="1.4" fill="#fff"/><path d="M10 7 V15.6 M5.7 11.3 H14.3 M7 8.3 L13 14.3 M13 8.3 L7 14.3" stroke="#1a1a70" stroke-width="1.3"/><circle cx="10" cy="11.3" r="1.3" fill="#fff"/></svg>
<div class="t" style="left:86.5px;top:752.38px;font-size:11.6px;color:#1e1e1e;transform:scaleY(1.08);transform-origin:0 9.82px;">Move to Stock</div>
<svg style="left:295px;top:610px" width="21" height="54" viewBox="0 0 21 54"><circle cx="7" cy="7" r="7" fill="#000"/><path d="M2.5 7 L5 4.5 V6 H9 V4.5 L11.5 7 L9 9.5 V8 H5 V9.5Z" fill="#fff"/><path d="M14 1.5 H19 V52 H14" fill="none" stroke="#0f2237" stroke-width="2"/></svg>
<svg style="left:22px;top:777px" width="30" height="30" viewBox="0 0 30 30"><circle cx="6.6" cy="7.5" r="5.2" fill="none" stroke="#c4c4c4" stroke-width="4"/><circle cx="15.6" cy="10.7" r="5" fill="#6e6e6e" stroke="#6e6e6e" stroke-width="2"/><circle cx="22" cy="22" r="5.6" fill="#fff" stroke="#000" stroke-width="3.4"/><path d="M8 7 Q17 9 21 20" fill="none" stroke="#fff" stroke-width="2.6"/><path d="M16.5 19.5 L21.5 25.5 L25 18" fill="none" stroke="#000" stroke-width="2.3"/><path d="M8 7 Q17 9 20.5 19" fill="none" stroke="#fff" stroke-width="1.6"/></svg>
<div class="t" style="left:57.3px;top:786.39px;font-size:13.6px;font-weight:bold;color:#111;">Reroutes</div>
<svg style="left:297px;top:782px" width="20" height="20" viewBox="0 0 20 20"><circle cx="10" cy="10" r="9" fill="none" stroke="#bdbdbd" stroke-width="1.5"/><path d="M10 4 V16 M4.5 10.5 L10 16 L15.5 10.5" fill="none" stroke="#bdbdbd" stroke-width="1.5"/></svg>
<div class="a" style="left:21px;top:812px;width:298px;height:1px;background:#bcbcbc"></div>
<svg style="left:23px;top:835px" width="28" height="14" viewBox="0 0 28 14"><path d="M0.7 7 L10.3 0.8 V5 H14 V9.5 H10.3 V13.2 Z" fill="#000" stroke="#000" stroke-width="0.8"/><path d="M27.8 7 L18.3 0.8 V5 H13.7 V9.5 H18.3 V13.2 Z" fill="#fff" stroke="#000" stroke-width="1"/></svg>
<div class="t" style="left:57.3px;top:836.14px;font-size:13.3px;font-weight:bold;color:#111;">Line Programming</div>
<svg style="left:297px;top:832px" width="20" height="20" viewBox="0 0 20 20"><circle cx="10" cy="10" r="9" fill="none" stroke="#bdbdbd" stroke-width="1.5"/><path d="M10 16 V4 M4.5 9.5 L10 4 L15.5 9.5" fill="none" stroke="#bdbdbd" stroke-width="1.5"/></svg>
<div class="a" style="left:22px;top:862px;width:297px;height:1px;background:#bcbcbc"></div>
<svg style="left:28px;top:874px" width="6" height="6" viewBox="0 0 6 6"><path d="M6 0 V6 H0 Z" fill="#595959"/></svg>
<svg style="left:44px;top:873px" width="14" height="8" viewBox="0 0 14 8"><path d="M0.5 4 L4 0.5 V2.5 H7 V5.5 H4 V7.5 Z" fill="#000" stroke="#000" stroke-width="0.8"/><path d="M13.5 4 L10 0.5 V2.5 H7 V5.5 H10 V7.5 Z" fill="#fff" stroke="#000" stroke-width="0.8"/></svg>
<div class="t" style="left:66.5px;top:872.28px;font-size:11.6px;color:#1e1e1e;transform:scaleY(1.08);transform-origin:0 9.82px;">Line Programming</div>
<svg style="left:48px;top:894px" width="6" height="6" viewBox="0 0 6 6"><path d="M6 0 V6 H0 Z" fill="#595959"/></svg>
<svg style="left:64px;top:890px" width="15" height="13" viewBox="0 0 15 13"><path d="M0.8 12.2 V1 H5 L6.5 2.5 H12.5 V4.5" fill="none" stroke="#000" stroke-width="1.5"/><path d="M0.8 12.2 L2.5 4.5 H14.3 L12.5 12.2 Z" fill="#fff" stroke="#000" stroke-width="1.5"/><path d="M5.5 8 L7 10 L10 6.5" fill="none" stroke="#000" stroke-width="1.2"/></svg>
<div class="t" style="left:86.5px;top:892.28px;font-size:11.6px;color:#1e1e1e;transform:scaleY(1.08);transform-origin:0 9.82px;">SMT Build Area</div>
<svg style="left:68px;top:913px" width="5" height="8" viewBox="0 0 5 8"><path d="M0.5 0.5 L4.5 4 L0.5 7.5 Z" fill="#444"/></svg>
<svg style="left:84px;top:909px" width="15" height="16" viewBox="0 0 15 16"><rect x="3" y="0.5" width="9" height="5" fill="#fff" stroke="#667" stroke-width="1"/><path d="M7.5 5.5 V7.5 M3 7.5 H12 M3 7.5 V9 M12 7.5 V9" stroke="#556" fill="none"/><rect x="0" y="9" width="6.5" height="4.5" fill="#3a80c8" stroke="#345" stroke-width="0.6"/><rect x="8.5" y="9" width="6.5" height="4.5" fill="#3a80c8" stroke="#345" stroke-width="0.6"/><path d="M1 15.5 H6 M9.5 15.5 H14.5" stroke="#444" stroke-width="1"/></svg>
<div class="t" style="left:106.5px;top:912.28px;font-size:11.6px;color:#1e1e1e;transform:scaleY(1.08);transform-origin:0 9.82px;">1 DI SMT Line 1</div>
<svg style="left:48px;top:934px" width="6" height="6" viewBox="0 0 6 6"><path d="M6 0 V6 H0 Z" fill="#595959"/></svg>
<svg style="left:64px;top:929px" width="14" height="15" viewBox="0 0 14 15"><path d="M8 0.7 H0.7 V14.3 H7" fill="none" stroke="#4a7a4a" stroke-width="1.3"/><path d="M2.5 3.5 H7 M2.5 7 H7 M2.5 11 H7" stroke="#2e5e2e" stroke-width="1.1"/><path d="M8 3 L9.5 4.5 L13 0.5 M8 6.5 L9.5 8 L13 4 M8 10 L9.5 11.5 L13 7.5" fill="none" stroke="#2e7e2e" stroke-width="1.4"/><path d="M13 12 V14.3 H8" fill="none" stroke="#4a7a4a" stroke-width="1.3"/></svg>
<div class="t" style="left:86.5px;top:932.28px;font-size:11.6px;color:#1e1e1e;transform:scaleY(1.08);transform-origin:0 9.82px;">Auto Place</div>
<div class="a" style="left:101px;top:947px;width:218px;height:20px;background:#b7d6f0"></div>
<svg style="left:85px;top:950px" width="13" height="14" viewBox="0 0 13 14"><rect x="1" y="0.5" width="11" height="8" fill="#3d8ad0" stroke="#333" stroke-width="1"/><rect x="2.5" y="2" width="8" height="5" fill="#8ed0f0"/><rect x="4" y="9" width="5" height="2" fill="#555"/><rect x="0.5" y="11" width="12" height="2.5" fill="#444"/></svg>
<div class="t" style="left:106.5px;top:952.28px;font-size:11.6px;color:#1e1e1e;transform:scaleY(1.08);transform-origin:0 9.82px;">Universal Fuzion / Advantis / Vantis /...</div>
<div class="a" style="left:345px;top:61px;width:1px;height:914px;background:#a9a9a9"></div>
<div class="a" style="left:342px;top:511px;width:2px;height:1px;background:#8a8a8a"></div>
<div class="a" style="left:342px;top:513px;width:2px;height:1px;background:#8a8a8a"></div>
<div class="a" style="left:342px;top:515px;width:2px;height:1px;background:#8a8a8a"></div>
<div class="a" style="left:342px;top:517px;width:2px;height:1px;background:#8a8a8a"></div>
<div class="a" style="left:342px;top:519px;width:2px;height:1px;background:#8a8a8a"></div>
<div class="a" style="left:342px;top:521px;width:2px;height:1px;background:#8a8a8a"></div>
<div class="a" style="left:342px;top:523px;width:2px;height:1px;background:#8a8a8a"></div>
<div class="a" style="left:342px;top:525px;width:2px;height:1px;background:#8a8a8a"></div>
<div class="a" style="left:345px;top:61px;width:293px;height:252px;border:1px solid #a9a9a9;border-left-color:#a9a9a9;background:#fff"></div>
<div class="a" style="left:347px;top:63px;width:278px;height:248px;border:1px solid #d8d8d8"></div>
<svg style="left:355px;top:70px" width="110" height="22" viewBox="0 0 110 22"><text x="1.2" y="16.6" font-size="16.6" font-family="Liberation Sans, sans-serif" fill="#9a9a9a" stroke="#fff" stroke-width="0.3">Machine List</text></svg>
<svg style="left:602px;top:76px" width="7" height="10" viewBox="0 0 7 10"><path d="M1.5 0.5 H5.5 V5 H7 V6 H4 V9.5 H3 V6 H0 V5 H1.5Z" fill="#555"/></svg>
<svg style="left:353px;top:101px" width="14" height="14" viewBox="0 0 14 14"><circle cx="7" cy="7" r="6.5" fill="#f4f4f4" stroke="#8a8a8a" stroke-width="1"/><circle cx="7" cy="7" r="4.6" fill="#2eaa3a"/><path d="M7 4 V10 M4 7 H10" stroke="#fff" stroke-width="1.8"/></svg>
<svg style="left:375px;top:100px" width="17" height="17" viewBox="0 0 17 17"><g transform="translate(8.5 8.5) rotate(15)" fill="#f0b428" stroke="#c88a10" stroke-width="0.6"><circle r="5.6"/><rect x="-2" y="-8" width="4" height="4" transform="rotate(0)"/><rect x="-2" y="-8" width="4" height="4" transform="rotate(60)"/><rect x="-2" y="-8" width="4" height="4" transform="rotate(120)"/><rect x="-2" y="-8" width="4" height="4" transform="rotate(180)"/><rect x="-2" y="-8" width="4" height="4" transform="rotate(240)"/><rect x="-2" y="-8" width="4" height="4" transform="rotate(300)"/><circle r="5" stroke="none"/><circle cx="-0.5" cy="-0.5" r="1.6" fill="#3a2a10" stroke="none"/><path d="M-1.5 1.5 A2.5 2.5 0 0 0 2 0" stroke="#fff6d0" fill="none" stroke-width="0.9"/></g></svg>
<div class="a" style="left:363px;top:135px;width:246px;height:160px;border:1px solid #d5d5d5;background:#fff"></div>
<div class="a" style="left:364px;top:158px;width:121px;height:21px;background:#f2f2f2"></div>
<div class="a" style="left:485px;top:158px;width:123px;height:21px;background:#dcdcdc"></div>
<div class="a" style="left:364px;top:158px;width:244px;height:1px;background:#d5d5d5"></div>
<div class="a" style="left:364px;top:179px;width:244px;height:1px;background:#d5d5d5"></div>
<div class="a" style="left:485px;top:136px;width:1px;height:43px;background:#d5d5d5"></div>
<div class="t" style="left:368.2px;top:142.58px;font-size:11.6px;color:#1e1e1e;transform:scaleY(1.07);transform-origin:0 9.82px;">Operation</div>
<div class="t" style="left:490px;top:142.58px;font-size:11.6px;color:#1e1e1e;transform:scaleY(1.07);transform-origin:0 9.82px;">Machine</div>
<div class="t" style="left:368.2px;top:164.48px;font-size:11.6px;color:#1e1e1e;transform:scaleY(1.07);transform-origin:0 9.82px;">Auto Place</div>
<div class="t" style="left:490px;top:164.48px;font-size:11.6px;color:#1e1e1e;transform:scaleY(1.07);transform-origin:0 9.82px;">Universal Fuzion /...</div>
<div class="a" style="left:356px;top:312px;width:282px;height:41px;border:1px solid #aaaaaa;border-right:none;background:#fff"></div>
<div class="a" style="left:358px;top:352px;width:280px;height:41px;border:1px solid #aaaaaa;background:linear-gradient(90deg,#efefef 0%,#e6e6e6 100%)"></div>
<div class="a" style="left:358px;top:392px;width:280px;height:41px;border:1px solid #aaaaaa;background:linear-gradient(90deg,#efefef 0%,#e6e6e6 100%)"></div>
<div class="a" style="left:358px;top:432px;width:280px;height:41px;border:1px solid #aaaaaa;background:linear-gradient(90deg,#efefef 0%,#e6e6e6 100%)"></div>
<div class="a" style="left:358px;top:472px;width:280px;height:41px;border:1px solid #aaaaaa;background:linear-gradient(90deg,#efefef 0%,#e6e6e6 100%)"></div>
<div class="a" style="left:637px;top:312px;width:1px;height:1px;background:#aaa"></div>
<div class="a" style="left:367px;top:326px;width:14px;height:14px;border:1px solid #6a6a6a;background:#fff"></div>
<div class="t" style="left:417.3px;top:327.87px;font-size:12.2px;font-weight:bold;color:#333;">Board Geometry</div>
<div class="a" style="left:367px;top:366px;width:14px;height:14px;border:1px solid #6a6a6a;background:#fff"></div>
<div class="t" style="left:417.3px;top:367.87px;font-size:12.2px;font-weight:bold;color:#333;">Part Management &amp; Troubleshooting</div>
<div class="a" style="left:367px;top:406px;width:14px;height:14px;border:1px solid #6a6a6a;background:#fff"></div>
<div class="t" style="left:417.3px;top:407.87px;font-size:12.2px;font-weight:bold;color:#333;">Angle Resolution</div>
<div class="a" style="left:367px;top:446px;width:14px;height:14px;border:1px solid #6a6a6a;background:#fff"></div>
<div class="t" style="left:417.3px;top:447.87px;font-size:12.2px;font-weight:bold;color:#333;">Program Transfer</div>
<div class="t" style="left:417.3px;top:487.87px;font-size:12.2px;font-weight:bold;color:#333;">Material Setup</div>
<div class="a" style="left:637px;top:512px;width:1px;height:464px;background:#b5b5b5"></div>
<div class="a" style="left:356px;top:935px;width:110px;height:38px;border:1px solid #d3d3d3;background:#f1f1f1"></div>
<svg style="left:373px;top:941px" width="26" height="26" viewBox="0 0 26 26"><rect x="0" y="0" width="25.5" height="26" rx="2.5" fill="#7f7f7f"/><rect x="7" y="5" width="2.6" height="16" fill="#fff"/><path d="M22 5 V21 L11.5 13Z" fill="#fff"/></svg>
<div class="t" style="left:404.3px;top:949.53px;font-size:12.6px;font-weight:bold;color:#999;letter-spacing:-0.7px;">Previous</div>
<div class="a" style="left:471px;top:935px;width:90px;height:38px;border:1px solid #a9a9a9;background:#e9e9e9"></div>
<svg style="left:489px;top:941px" width="26" height="26" viewBox="0 0 26 26"><rect x="0" y="0" width="25.5" height="26" rx="2.5" fill="#000"/><path d="M4 5 V21 L14.5 13Z" fill="#fff"/><rect x="16" y="5" width="2.6" height="16" fill="#fff"/></svg>
<div class="t" style="left:519.5px;top:949.36px;font-size:12.8px;font-weight:bold;color:#333;">Next</div>
<div class="a" style="left:643px;top:62px;width:841px;height:1px;background:#a8a8a8"></div>
<div class="a" style="left:643px;top:63px;width:841px;height:1px;background:#d8d8d8"></div>
<div class="a" style="left:1483px;top:62px;width:1px;height:913px;background:#a8a8a8"></div>
<div class="a" style="left:643px;top:154px;width:841px;height:1px;background:#dedede"></div>
<div class="a" style="left:800px;top:68px;width:1px;height:82px;background:#dadada"></div>
<div class="a" style="left:1052px;top:68px;width:1px;height:82px;background:#dadada"></div>
<div class="a" style="left:1285px;top:68px;width:1px;height:82px;background:#dadada"></div>
<svg style="left:651px;top:69px" width="31" height="31" viewBox="0 0 31 31"><rect x="1" y="9" width="10" height="10.5" fill="#000"/><rect x="11" y="19.5" width="10.5" height="10" fill="#000"/><path d="M18.5 2.5 L27.5 11.5 M27.5 2.5 L18.5 11.5" stroke="#000" stroke-width="2.8"/></svg>
<div class="t" style="left:648.5px;top:107.47px;font-size:11.5px;color:#333;transform:scaleY(1.07);transform-origin:0 9.73px;">Assign</div>
<div class="t" style="left:649px;top:121.27px;font-size:11.5px;color:#333;transform:scaleY(1.07);transform-origin:0 9.73px;">Origin</div>
<svg style="left:692px;top:69px" width="13" height="15" viewBox="0 0 13 15"><path d="M0.5 0.5 L12.5 3 V14.5 L0.5 12Z" fill="#333" stroke="#111" stroke-width="0.8"/><circle cx="6.3" cy="7.3" r="2.3" fill="#f00"/></svg>
<div class="t" style="left:708.7px;top:72.97px;font-size:11.5px;color:#333;transform:scaleY(1.07);transform-origin:0 9.73px;">Snap To Feature</div>
<div class="t" style="left:686px;top:139.77px;font-size:11.5px;color:#333;transform:scaleY(1.07);transform-origin:0 9.73px;">CAD Controls</div>
<svg style="left:812px;top:71px" width="28" height="28" viewBox="0 0 28 28"><circle cx="14" cy="14" r="13.5" fill="#e8e8e8" stroke="#8a8a8a"/><circle cx="14" cy="14" r="11" fill="#1f9a2a"/><circle cx="14" cy="14" r="11" fill="none" stroke="#0d6a14" stroke-width="1"/><circle cx="14" cy="13" r="4" fill="#b8e8b0"/><path d="M14 3 V9 M14 17 V25 M3 14 H10 M18 14 H25 M6 6 L11 11 M17 17 L22 22 M22 6 L17 11 M11 17 L6 22" stroke="#5cc85c" stroke-width="1"/></svg>
<div class="t" style="left:808.7px;top:106.97px;font-size:11.5px;color:#333;transform:scaleY(1.07);transform-origin:0 9.73px;">Create</div>
<div class="t" style="left:806px;top:120.67px;font-size:11.5px;color:#333;transform:scaleY(1.07);transform-origin:0 9.73px;">Fiducial</div>
<svg style="left:854px;top:70px" width="14" height="14" viewBox="0 0 14 14"><circle cx="7" cy="7" r="6.5" fill="#eee" stroke="#ccc"/><circle cx="7" cy="7" r="4.8" fill="#a8dca8"/><circle cx="7" cy="7" r="2" fill="#e0f4e0"/></svg>
<div class="t" style="left:872.4px;top:72.67px;font-size:11.5px;color:#b4b4b4;transform:scaleY(1.07);transform-origin:0 9.73px;">Edit Fiducial</div>
<svg style="left:854px;top:93px" width="14" height="14" viewBox="0 0 14 14"><circle cx="7" cy="7" r="6.5" fill="#eee" stroke="#ccc"/><circle cx="7" cy="7" r="4.8" fill="#f0a8b0"/><rect x="4" y="6" width="6" height="2" fill="#fff"/></svg>
<div class="t" style="left:872.4px;top:96.07px;font-size:11.5px;color:#b4b4b4;transform:scaleY(1.07);transform-origin:0 9.73px;">Convert to Component</div>
<svg style="left:853px;top:115px" width="16" height="16" viewBox="0 0 16 16"><circle cx="6" cy="6" r="5.5" fill="#2a9a2a" stroke="#666"/><circle cx="6" cy="6" r="2" fill="#c8f0c8"/><rect x="6" y="8.5" width="10" height="7.5" fill="#2a3a4a"/><rect x="8.5" y="10.5" width="5" height="3" fill="#d8b040"/></svg>
<div class="t" style="left:872.4px;top:118.87px;font-size:11.5px;color:#333;transform:scaleY(1.07);transform-origin:0 9.73px;">From Lead</div>
<svg style="left:1010px;top:71px" width="29" height="28" viewBox="0 0 29 28"><circle cx="8.5" cy="8.5" r="8" fill="#2a9a2a" stroke="#888"/><circle cx="8.5" cy="8.5" r="3" fill="#b8e8b0"/><rect x="12" y="10" width="15" height="17" rx="1" fill="#d8a840" stroke="#a07020"/><rect x="14" y="12.5" width="11" height="13" fill="#e8eef2"/><rect x="17" y="8" width="5" height="3" fill="#888"/><text x="15.5" y="21" font-size="5" font-family="Liberation Sans" font-weight="bold" fill="#333">OK</text></svg>
<div class="t" style="left:1001px;top:106.97px;font-size:11.5px;color:#333;transform:scaleY(1.07);transform-origin:0 9.73px;">Show All</div>
<div class="t" style="left:1002px;top:120.67px;font-size:11.5px;color:#333;transform:scaleY(1.07);transform-origin:0 9.73px;">Fiducials</div>
<div class="t" style="left:904.8px;top:139.67px;font-size:11.5px;color:#333;transform:scaleY(1.07);transform-origin:0 9.73px;">Fiducials</div>
<svg style="left:1071px;top:71px" width="30" height="30" viewBox="0 0 30 30"><path d="M11 2 Q2 6 3 17 Q4 24 9 26" fill="none" stroke="#2aa030" stroke-width="3.2"/><path d="M3 22 L10 30 L12 21Z" fill="#2aa030"/><path d="M9 3 L11 0 L14 3" fill="#2aa030"/><text x="10" y="20" font-size="13" font-weight="bold" font-family="Liberation Sans" fill="#2a8a30" letter-spacing="-0.5">90</text></svg>
<div class="t" style="left:1073.3px;top:106.77px;font-size:11.5px;color:#333;transform:scaleY(1.07);transform-origin:0 9.73px;">Board</div>
<div class="t" style="left:1058.7px;top:120.97px;font-size:11.5px;color:#333;transform:scaleY(1.07);transform-origin:0 9.73px;">Orientation</div>
<div class="a" style="left:1123px;top:66px;width:38px;height:68px;background:#93bfe6"></div>
<svg style="left:1130px;top:73px" width="25" height="24" viewBox="0 0 25 24"><rect x="0" y="0" width="24" height="3" fill="#7ac040"/><rect x="0.5" y="0.5" width="1.8" height="1.8" fill="#4a8ad0"/><rect x="5.1" y="0.5" width="1.8" height="1.8" fill="#4a8ad0"/><rect x="9.7" y="0.5" width="1.8" height="1.8" fill="#4a8ad0"/><rect x="14.3" y="0.5" width="1.8" height="1.8" fill="#4a8ad0"/><rect x="18.9" y="0.5" width="1.8" height="1.8" fill="#4a8ad0"/><rect x="23.5" y="0.5" width="1.8" height="1.8" fill="#4a8ad0"/><rect x="1.0" y="7.0" width="1.6" height="1.6" fill="#4a80d8"/><rect x="5.6" y="7.0" width="1.6" height="1.6" fill="#4a80d8"/><rect x="10.2" y="7.0" width="1.6" height="1.6" fill="#4a80d8"/><rect x="14.8" y="7.0" width="1.6" height="1.6" fill="#4a80d8"/><rect x="19.4" y="7.0" width="1.6" height="1.6" fill="#4a80d8"/><rect x="24.0" y="7.0" width="1.6" height="1.6" fill="#4a80d8"/><rect x="1.0" y="12.5" width="1.6" height="1.6" fill="#4a80d8"/><rect x="5.6" y="12.5" width="1.6" height="1.6" fill="#4a80d8"/><rect x="10.2" y="12.5" width="1.6" height="1.6" fill="#4a80d8"/><rect x="14.8" y="12.5" width="1.6" height="1.6" fill="#4a80d8"/><rect x="19.4" y="12.5" width="1.6" height="1.6" fill="#4a80d8"/><rect x="24.0" y="12.5" width="1.6" height="1.6" fill="#4a80d8"/><rect x="1.0" y="18.0" width="1.6" height="1.6" fill="#4a80d8"/><rect x="5.6" y="18.0" width="1.6" height="1.6" fill="#4a80d8"/><rect x="10.2" y="18.0" width="1.6" height="1.6" fill="#4a80d8"/><rect x="14.8" y="18.0" width="1.6" height="1.6" fill="#4a80d8"/><rect x="19.4" y="18.0" width="1.6" height="1.6" fill="#4a80d8"/><rect x="24.0" y="18.0" width="1.6" height="1.6" fill="#4a80d8"/><rect x="1.0" y="23.5" width="1.6" height="1.6" fill="#4a80d8"/><rect x="5.6" y="23.5" width="1.6" height="1.6" fill="#4a80d8"/><rect x="10.2" y="23.5" width="1.6" height="1.6" fill="#4a80d8"/><rect x="14.8" y="23.5" width="1.6" height="1.6" fill="#4a80d8"/><rect x="19.4" y="23.5" width="1.6" height="1.6" fill="#4a80d8"/><rect x="24.0" y="23.5" width="1.6" height="1.6" fill="#4a80d8"/></svg>
<div class="t" style="left:1131.7px;top:106.77px;font-size:11.5px;color:#333;transform:scaleY(1.07);transform-origin:0 9.73px;">Top</div>
<div class="t" style="left:1130.8px;top:120.97px;font-size:11.5px;color:#333;transform:scaleY(1.07);transform-origin:0 9.73px;">Side</div>
<svg style="left:1173px;top:73px" width="25" height="24" viewBox="0 0 25 24"><rect x="1.0" y="1.0" width="1.6" height="1.6" fill="#4a80d8"/><rect x="5.6" y="1.0" width="1.6" height="1.6" fill="#4a80d8"/><rect x="10.2" y="1.0" width="1.6" height="1.6" fill="#4a80d8"/><rect x="14.8" y="1.0" width="1.6" height="1.6" fill="#4a80d8"/><rect x="19.4" y="1.0" width="1.6" height="1.6" fill="#4a80d8"/><rect x="24.0" y="1.0" width="1.6" height="1.6" fill="#4a80d8"/><rect x="1.0" y="6.5" width="1.6" height="1.6" fill="#4a80d8"/><rect x="5.6" y="6.5" width="1.6" height="1.6" fill="#4a80d8"/><rect x="10.2" y="6.5" width="1.6" height="1.6" fill="#4a80d8"/><rect x="14.8" y="6.5" width="1.6" height="1.6" fill="#4a80d8"/><rect x="19.4" y="6.5" width="1.6" height="1.6" fill="#4a80d8"/><rect x="24.0" y="6.5" width="1.6" height="1.6" fill="#4a80d8"/><rect x="1.0" y="12.0" width="1.6" height="1.6" fill="#4a80d8"/><rect x="5.6" y="12.0" width="1.6" height="1.6" fill="#4a80d8"/><rect x="10.2" y="12.0" width="1.6" height="1.6" fill="#4a80d8"/><rect x="14.8" y="12.0" width="1.6" height="1.6" fill="#4a80d8"/><rect x="19.4" y="12.0" width="1.6" height="1.6" fill="#4a80d8"/><rect x="24.0" y="12.0" width="1.6" height="1.6" fill="#4a80d8"/><rect x="1.0" y="17.5" width="1.6" height="1.6" fill="#4a80d8"/><rect x="5.6" y="17.5" width="1.6" height="1.6" fill="#4a80d8"/><rect x="10.2" y="17.5" width="1.6" height="1.6" fill="#4a80d8"/><rect x="14.8" y="17.5" width="1.6" height="1.6" fill="#4a80d8"/><rect x="19.4" y="17.5" width="1.6" height="1.6" fill="#4a80d8"/><rect x="24.0" y="17.5" width="1.6" height="1.6" fill="#4a80d8"/><rect x="0" y="21" width="24" height="3" fill="#7ac040"/></svg>
<div class="t" style="left:1165.3px;top:106.77px;font-size:11.5px;color:#333;transform:scaleY(1.07);transform-origin:0 9.73px;">Bottom</div>
<div class="t" style="left:1173.3px;top:120.97px;font-size:11.5px;color:#333;transform:scaleY(1.07);transform-origin:0 9.73px;">Side</div>
<svg style="left:1230px;top:71px" width="29" height="28" viewBox="0 0 29 28"><rect x="0.5" y="1.5" width="18" height="13" rx="1" fill="#2a3440" stroke="#d8a040" stroke-width="0.8"/><rect x="4" y="5" width="10" height="5" fill="#d8b050"/><rect x="13" y="10" width="15" height="17" rx="1" fill="#d8a840" stroke="#a07020"/><rect x="15" y="12.5" width="11" height="13" fill="#e8eef2"/><rect x="18" y="8" width="5" height="3" fill="#888"/><text x="16.5" y="21" font-size="5" font-family="Liberation Sans" font-weight="bold" fill="#333">OK</text></svg>
<div class="t" style="left:1230.8px;top:106.77px;font-size:11.5px;color:#333;transform:scaleY(1.07);transform-origin:0 9.73px;">Show</div>
<div class="t" style="left:1211.3px;top:120.97px;font-size:11.5px;color:#333;transform:scaleY(1.07);transform-origin:0 9.73px;">Components</div>
<div class="t" style="left:1139.5px;top:139.27px;font-size:11.5px;color:#333;transform:scaleY(1.07);transform-origin:0 9.73px;">Orientation</div>
<div class="a" style="left:646px;top:312px;width:838px;height:1px;background:#cfcfcf"></div>
<div class="a" style="left:646px;top:312px;width:1px;height:638px;background:#cfcfcf"></div>
<div class="a" style="left:1466px;top:313px;width:17px;height:621px;background:#efefef"></div>
<svg style="left:1470px;top:320px" width="9" height="6" viewBox="0 0 9 6"><path d="M0.5 5 L4.5 1 L8.5 5" fill="none" stroke="#b8b8b8" stroke-width="1.4"/></svg>
<svg style="left:1470px;top:922px" width="9" height="6" viewBox="0 0 9 6"><path d="M0.5 1 L4.5 5 L8.5 1" fill="none" stroke="#b8b8b8" stroke-width="1.4"/></svg>
<div class="a" style="left:647px;top:934px;width:836px;height:16px;background:#efefef"></div>
<svg style="left:653px;top:938px" width="6" height="9" viewBox="0 0 6 9"><path d="M5 0.5 L1 4.5 L5 8.5" fill="none" stroke="#b8b8b8" stroke-width="1.4"/></svg>
<svg style="left:1455px;top:938px" width="6" height="9" viewBox="0 0 6 9"><path d="M1 0.5 L5 4.5 L1 8.5" fill="none" stroke="#b8b8b8" stroke-width="1.4"/></svg>
<div class="a" style="left:1446px;top:911px;width:20px;height:20px;border:1px solid #a8a8a8;background:#ececec"></div>
<svg style="left:1449px;top:914px" width="14" height="14" viewBox="0 0 14 14"><circle cx="7" cy="7" r="6" fill="#ddd" stroke="#999"/><circle cx="7" cy="7" r="4.5" fill="#2a9a30"/><path d="M5 4.5 L9 8.5 M5 4.5 V7.5 M5 4.5 H8" stroke="#fff" stroke-width="1.4"/></svg>
<div class="a" style="left:647px;top:950px;width:835px;height:24px;background:#0071c5"></div>
<div class="a" style="left:647px;top:974px;width:836px;height:2px;background:#d8d8d8"></div>
<div class="t" style="left:651.9px;top:957.82px;font-size:11.2px;color:#fff;transform:scaleY(1.06);transform-origin:0 9.48px;">(0.0749 , 1.1294) Inches</div>
<svg style="left:1237px;top:955px" width="14" height="15" viewBox="0 0 14 15"><path d="M6 7 V4 A3 3 0 0 1 12 4 V6" fill="none" stroke="#ddd" stroke-width="1.6"/><rect x="0.5" y="7" width="10" height="7.5" fill="#d8b020" stroke="#333" stroke-width="0.6"/><path d="M2 13 L5 8.5 M5 13 L8 8.5 M8 13 L10 10" stroke="#222" stroke-width="1"/></svg>
<div class="a" style="left:1259px;top:954px;width:16px;height:16px;border:1px dashed #4a3020"></div>
<svg style="left:1260.6px;top:955.8000000000001px" width="14" height="14" viewBox="0 0 14 14"><path d="M6 4.5 L1.5 11" stroke="#c8a060" stroke-width="2.4" stroke-linecap="round"/><circle cx="8" cy="3.8" r="3.9" fill="#d8ecf8" stroke="#a88850" stroke-width="1"/><circle cx="7" cy="3" r="1.2" fill="#fff"/></svg>
<div class="t" style="left:1283px;top:953.91px;font-size:7.2px;font-weight:bold;color:#4a4440;">100</div>
<svg style="left:1285.4px;top:958.2px" width="14" height="14" viewBox="0 0 14 14"><path d="M6 4.5 L1.5 11" stroke="#c8a060" stroke-width="2.4" stroke-linecap="round"/><circle cx="8" cy="3.8" r="3.9" fill="#d8ecf8" stroke="#a88850" stroke-width="1"/><circle cx="7" cy="3" r="1.2" fill="#fff"/></svg>
<div class="t" style="left:1305.8px;top:953.91px;font-size:7.2px;font-weight:bold;color:#4a4440;">ALL</div>
<svg style="left:1308.6px;top:958.2px" width="14" height="14" viewBox="0 0 14 14"><path d="M6 4.5 L1.5 11" stroke="#c8a060" stroke-width="2.4" stroke-linecap="round"/><circle cx="8" cy="3.8" r="3.9" fill="#d8ecf8" stroke="#a88850" stroke-width="1"/><circle cx="7" cy="3" r="1.2" fill="#fff"/></svg>
<svg style="left:1331px;top:956px" width="13" height="2" viewBox="0 0 13 2"><path d="M0 1 H5.5 M7 1 H13" stroke="#000" stroke-width="2"/></svg>
<svg style="left:1328.2px;top:957.8000000000001px" width="14" height="14" viewBox="0 0 14 14"><path d="M6 4.5 L10.5 11" stroke="#c8a060" stroke-width="2.4" stroke-linecap="round"/><circle cx="4" cy="3.8" r="3.9" fill="#d8ecf8" stroke="#a88850" stroke-width="1"/><circle cx="3" cy="3" r="1.2" fill="#fff"/></svg>
<svg style="left:1359px;top:956px" width="8" height="2" viewBox="0 0 8 2"><path d="M0 1 H8" stroke="#5a4030" stroke-width="2"/></svg>
<svg style="left:1351.4px;top:957.8000000000001px" width="14" height="14" viewBox="0 0 14 14"><path d="M6 4.5 L10.5 11" stroke="#c8a060" stroke-width="2.4" stroke-linecap="round"/><circle cx="4" cy="3.8" r="3.9" fill="#d8ecf8" stroke="#a88850" stroke-width="1"/><circle cx="3" cy="3" r="1.2" fill="#fff"/></svg>
<div class="a" style="left:1374px;top:952px;width:57px;height:20px;background:#fff;border:1px solid #ddd"></div>
<div class="t" style="left:1379px;top:957.02px;font-size:11.2px;color:#333;">145%</div>
<div class="a" style="left:1415px;top:953px;width:15px;height:18px;border:1px solid #bbb;background:#f4f4f4"></div>
<svg style="left:1418px;top:954px" width="9" height="16" viewBox="0 0 9 16"><path d="M1 5.5 L4.5 2 L8 5.5 M1 10.5 L4.5 14 L8 10.5" fill="none" stroke="#555" stroke-width="1.1"/></svg>
<svg style="left:1439px;top:958.2px" width="14" height="14" viewBox="0 0 14 14"><path d="M6 4.5 L10.5 11" stroke="#c8a060" stroke-width="2.4" stroke-linecap="round"/><circle cx="4" cy="3.8" r="3.9" fill="#d8ecf8" stroke="#a88850" stroke-width="1"/><circle cx="3" cy="3" r="1.2" fill="#fff"/></svg>
<svg style="left:1448px;top:953px" width="8" height="8" viewBox="0 0 8 8"><path d="M4 0 V8 M0 4 H8" stroke="#5a4030" stroke-width="2"/></svg>
<svg style="left:1461px;top:958.2px" width="14" height="14" viewBox="0 0 14 14"><path d="M6 4.5 L10.5 11" stroke="#c8a060" stroke-width="2.4" stroke-linecap="round"/><circle cx="4" cy="3.8" r="3.9" fill="#d8ecf8" stroke="#a88850" stroke-width="1"/><circle cx="3" cy="3" r="1.2" fill="#fff"/></svg>
<svg style="left:1466px;top:953px" width="13" height="7" viewBox="0 0 13 7"><path d="M3 0 V6.5 M0 3.2 H6.5 M9.5 0 V6.5 M6.5 3.2 H13" stroke="#000" stroke-width="2"/></svg>
<svg style="left:0;top:0" width="1501" height="993" viewBox="0 0 1501 993" font-family="Liberation Sans, sans-serif" fill="#000"><g fill="#2b2b2b"><rect x="676.5" y="448.5" width="768.2" height="357.0" fill="none" stroke="#3a3a3a" stroke-width="1.2"/><rect x="688.9" y="461.2" width="19.3" height="19.0" fill="#fff" stroke="#666" stroke-width="1"/><circle cx="698.5" cy="470.7" r="9.6" fill="#000"/><text x="688.7" y="458.0" font-size="9.3">MH4</text><rect x="721.8" y="450.5" width="13.7" height="27.4" fill="#fff" stroke="#8c8c8c" stroke-width="1.1"/><rect x="722.5" y="453.5" width="12.3" height="21.4" fill="#000" stroke="none" stroke-width="1"/><text x="722.3" y="447.6" font-size="5.5" fill="#555">TP5</text><rect x="741.8" y="463.2" width="9.0" height="15.6" fill="#fff" stroke="#8c8c8c" stroke-width="1.2"/><rect x="743.3" y="464.9" width="6.0" height="5.3" fill="#000" stroke="none" stroke-width="1"/><rect x="743.3" y="471.8" width="6.0" height="5.3" fill="#000" stroke="none" stroke-width="1"/><text x="741.3" y="461.0" font-size="5.5" fill="#555">C28</text><rect x="752.8" y="469.8" width="16.0" height="9.0" fill="#fff" stroke="#8c8c8c" stroke-width="1.2"/><rect x="754.5" y="471.3" width="5.5" height="6.0" fill="#000" stroke="none" stroke-width="1"/><rect x="761.6" y="471.3" width="5.5" height="6.0" fill="#000" stroke="none" stroke-width="1"/><text x="752.0" y="466.7" font-size="9.3">R25</text><rect x="736.0" y="482.5" width="10.0" height="7.0" fill="#fff" stroke="#8c8c8c" stroke-width="1"/><rect x="736.0" y="491.5" width="10.0" height="7.0" fill="#fff" stroke="#8c8c8c" stroke-width="1"/><rect x="733.5" y="482" width="5" height="6.5" rx="1" fill="#000"/><rect x="743.5" y="482" width="5" height="6.5" rx="1" fill="#000"/><rect x="733.5" y="491.5" width="5" height="6.5" rx="1" fill="#000"/><rect x="743.5" y="491.5" width="5" height="6.5" rx="1" fill="#000"/><rect x="751.8" y="482.5" width="14.5" height="16.0" fill="#fff" stroke="#8c8c8c" stroke-width="1"/><rect x="753.0" y="484.0" width="12.0" height="1.6" fill="#111" stroke="none" stroke-width="1"/><rect x="753.0" y="486.9" width="12.0" height="1.6" fill="#111" stroke="none" stroke-width="1"/><rect x="753.0" y="489.8" width="12.0" height="1.6" fill="#111" stroke="none" stroke-width="1"/><rect x="753.0" y="492.7" width="12.0" height="1.6" fill="#111" stroke="none" stroke-width="1"/><rect x="753.0" y="495.6" width="12.0" height="1.6" fill="#111" stroke="none" stroke-width="1"/><rect x="757.5" y="483.0" width="3.5" height="15.0" fill="#000" stroke="none" stroke-width="1"/><rect x="713.8" y="487.2" width="16.4" height="9.0" fill="#fff" stroke="#8c8c8c" stroke-width="1.2"/><rect x="715.5" y="488.7" width="5.7" height="6.0" fill="#000" stroke="none" stroke-width="1"/><rect x="722.8" y="488.7" width="5.7" height="6.0" fill="#000" stroke="none" stroke-width="1"/><text x="697.3" y="494.7" font-size="9.3">C26</text><rect x="686.5" y="498.5" width="7.7" height="7.7" fill="none" stroke="#999" stroke-width="0.8"/><path d="M690.35 498 V506.7 M686 502.35 H694.7" stroke="#000" stroke-width="1.2"/><text x="686.0" y="496.5" font-size="5.5" fill="#555">FM3</text><rect x="741.8" y="501.2" width="9.0" height="15.6" fill="#fff" stroke="#8c8c8c" stroke-width="1.2"/><rect x="743.3" y="502.9" width="6.0" height="5.3" fill="#000" stroke="none" stroke-width="1"/><rect x="743.3" y="509.8" width="6.0" height="5.3" fill="#000" stroke="none" stroke-width="1"/><text x="741.3" y="522.5" font-size="5.5" fill="#555">C27</text><rect x="752.8" y="501.2" width="16.0" height="9.0" fill="#fff" stroke="#8c8c8c" stroke-width="1.2"/><rect x="754.5" y="502.7" width="5.5" height="6.0" fill="#000" stroke="none" stroke-width="1"/><rect x="761.6" y="502.7" width="5.5" height="6.0" fill="#000" stroke="none" stroke-width="1"/><text x="752.0" y="520.0" font-size="9.3">R24</text><rect x="776.8" y="468.8" width="19.0" height="20.0" fill="none" stroke="#666" stroke-width="1"/><rect x="783.3" y="470.0" width="5.7" height="8.0" fill="#000" stroke="none" stroke-width="1"/><rect x="779.0" y="482.0" width="6.0" height="7.0" fill="#000" stroke="none" stroke-width="1"/><rect x="789.5" y="482.0" width="5.8" height="7.0" fill="#000" stroke="none" stroke-width="1"/><rect x="801.1" y="468.8" width="19.0" height="20.0" fill="none" stroke="#666" stroke-width="1"/><rect x="807.6" y="470.0" width="5.7" height="8.0" fill="#000" stroke="none" stroke-width="1"/><rect x="803.3" y="482.0" width="6.0" height="7.0" fill="#000" stroke="none" stroke-width="1"/><rect x="813.8" y="482.0" width="5.8" height="7.0" fill="#000" stroke="none" stroke-width="1"/><text x="780.0" y="465.3" font-size="9.3">Q2</text><text x="804.0" y="465.3" font-size="9.3">Q1</text><rect x="801.1" y="490.5" width="16.0" height="9.0" fill="#fff" stroke="#8c8c8c" stroke-width="1.2"/><rect x="802.8" y="492.0" width="5.5" height="6.0" fill="#000" stroke="none" stroke-width="1"/><rect x="809.9" y="492.0" width="5.5" height="6.0" fill="#000" stroke="none" stroke-width="1"/><text x="784.0" y="497.3" font-size="9.3">R26</text><rect x="823.8" y="464.9" width="146.4" height="23.9" fill="none" stroke="#333" stroke-width="1"/><rect x="836.5" y="465.3" width="2.1" height="4.3" fill="#000" stroke="none" stroke-width="1"/><rect x="839.6" y="465.3" width="2.1" height="4.3" fill="#000" stroke="none" stroke-width="1"/><rect x="842.6" y="465.3" width="2.1" height="4.3" fill="#000" stroke="none" stroke-width="1"/><rect x="845.7" y="465.3" width="2.1" height="4.3" fill="#000" stroke="none" stroke-width="1"/><rect x="848.8" y="465.3" width="2.1" height="4.3" fill="#000" stroke="none" stroke-width="1"/><rect x="851.8" y="465.3" width="2.1" height="4.3" fill="#000" stroke="none" stroke-width="1"/><rect x="854.9" y="465.3" width="2.1" height="4.3" fill="#000" stroke="none" stroke-width="1"/><rect x="858.0" y="465.3" width="2.1" height="4.3" fill="#000" stroke="none" stroke-width="1"/><rect x="861.0" y="465.3" width="2.1" height="4.3" fill="#000" stroke="none" stroke-width="1"/><rect x="864.1" y="465.3" width="2.1" height="4.3" fill="#000" stroke="none" stroke-width="1"/><rect x="867.2" y="465.3" width="2.1" height="4.3" fill="#000" stroke="none" stroke-width="1"/><rect x="870.2" y="465.3" width="2.1" height="4.3" fill="#000" stroke="none" stroke-width="1"/><rect x="873.3" y="465.3" width="2.1" height="4.3" fill="#000" stroke="none" stroke-width="1"/><rect x="876.4" y="465.3" width="2.1" height="4.3" fill="#000" stroke="none" stroke-width="1"/><rect x="879.4" y="465.3" width="2.1" height="4.3" fill="#000" stroke="none" stroke-width="1"/><rect x="882.5" y="465.3" width="2.1" height="4.3" fill="#000" stroke="none" stroke-width="1"/><rect x="885.6" y="465.3" width="2.1" height="4.3" fill="#000" stroke="none" stroke-width="1"/><rect x="888.6" y="465.3" width="2.1" height="4.3" fill="#000" stroke="none" stroke-width="1"/><rect x="891.7" y="465.3" width="2.1" height="4.3" fill="#000" stroke="none" stroke-width="1"/><rect x="894.8" y="465.3" width="2.1" height="4.3" fill="#000" stroke="none" stroke-width="1"/><rect x="897.8" y="465.3" width="2.1" height="4.3" fill="#000" stroke="none" stroke-width="1"/><rect x="900.9" y="465.3" width="2.1" height="4.3" fill="#000" stroke="none" stroke-width="1"/><rect x="904.0" y="465.3" width="2.1" height="4.3" fill="#000" stroke="none" stroke-width="1"/><rect x="907.0" y="465.3" width="2.1" height="4.3" fill="#000" stroke="none" stroke-width="1"/><rect x="910.1" y="465.3" width="2.1" height="4.3" fill="#000" stroke="none" stroke-width="1"/><rect x="913.2" y="465.3" width="2.1" height="4.3" fill="#000" stroke="none" stroke-width="1"/><rect x="916.2" y="465.3" width="2.1" height="4.3" fill="#000" stroke="none" stroke-width="1"/><rect x="919.3" y="465.3" width="2.1" height="4.3" fill="#000" stroke="none" stroke-width="1"/><rect x="922.4" y="465.3" width="2.1" height="4.3" fill="#000" stroke="none" stroke-width="1"/><rect x="925.4" y="465.3" width="2.1" height="4.3" fill="#000" stroke="none" stroke-width="1"/><rect x="928.5" y="465.3" width="2.1" height="4.3" fill="#000" stroke="none" stroke-width="1"/><rect x="931.6" y="465.3" width="2.1" height="4.3" fill="#000" stroke="none" stroke-width="1"/><rect x="934.7" y="465.3" width="2.1" height="4.3" fill="#000" stroke="none" stroke-width="1"/><rect x="937.7" y="465.3" width="2.1" height="4.3" fill="#000" stroke="none" stroke-width="1"/><rect x="940.8" y="465.3" width="2.1" height="4.3" fill="#000" stroke="none" stroke-width="1"/><rect x="943.9" y="465.3" width="2.1" height="4.3" fill="#000" stroke="none" stroke-width="1"/><rect x="946.9" y="465.3" width="2.1" height="4.3" fill="#000" stroke="none" stroke-width="1"/><rect x="950.0" y="465.3" width="2.1" height="4.3" fill="#000" stroke="none" stroke-width="1"/><rect x="953.1" y="465.3" width="2.1" height="4.3" fill="#000" stroke="none" stroke-width="1"/><rect x="956.1" y="465.3" width="2.1" height="4.3" fill="#000" stroke="none" stroke-width="1"/><rect x="823.6" y="480.0" width="8.9" height="9.0" fill="#000" stroke="none" stroke-width="1"/><rect x="962.0" y="480.0" width="8.5" height="9.0" fill="#000" stroke="none" stroke-width="1"/><text x="892.0" y="461.3" font-size="9.3">J9</text><rect x="991.8" y="459.8" width="16.4" height="8.4" fill="#fff" stroke="#8c8c8c" stroke-width="1.2"/><rect x="993.5" y="461.3" width="5.7" height="5.4" fill="#000" stroke="none" stroke-width="1"/><rect x="1000.8" y="461.3" width="5.7" height="5.4" fill="#000" stroke="none" stroke-width="1"/><text x="991.3" y="456.0" font-size="9.3">C56</text><rect x="978.5" y="470.9" width="44.0" height="28.3" fill="none" stroke="#555" stroke-width="1"/><rect x="979.5" y="472.9" width="15.5" height="4.2" rx="2" fill="#000"/><rect x="1006.5" y="472.9" width="15.5" height="4.2" rx="2" fill="#000"/><rect x="979.5" y="479.8" width="15.5" height="4.2" rx="2" fill="#000"/><rect x="1006.5" y="479.8" width="15.5" height="4.2" rx="2" fill="#000"/><rect x="979.5" y="486.7" width="15.5" height="4.2" rx="2" fill="#000"/><rect x="1006.5" y="486.7" width="15.5" height="4.2" rx="2" fill="#000"/><rect x="979.5" y="493.6" width="15.5" height="4.2" rx="2" fill="#000"/><rect x="1006.5" y="493.6" width="15.5" height="4.2" rx="2" fill="#000"/><text x="992.0" y="509.3" font-size="9.3">U23</text><rect x="1041.8" y="454.9" width="34.1" height="17.9" fill="none" stroke="#333" stroke-width="1"/><rect x="1042.6" y="455.0" width="2.4" height="4.5" fill="#000" stroke="none" stroke-width="1"/><rect x="1046.1" y="455.0" width="2.4" height="4.5" fill="#000" stroke="none" stroke-width="1"/><rect x="1049.6" y="455.0" width="2.4" height="4.5" fill="#000" stroke="none" stroke-width="1"/><rect x="1053.1" y="455.0" width="2.4" height="4.5" fill="#000" stroke="none" stroke-width="1"/><rect x="1056.6" y="455.0" width="2.4" height="4.5" fill="#000" stroke="none" stroke-width="1"/><rect x="1060.1" y="455.0" width="2.4" height="4.5" fill="#000" stroke="none" stroke-width="1"/><rect x="1063.6" y="455.0" width="2.4" height="4.5" fill="#000" stroke="none" stroke-width="1"/><rect x="1067.1" y="455.0" width="2.4" height="4.5" fill="#000" stroke="none" stroke-width="1"/><rect x="1073.0" y="466.5" width="3.0" height="6.5" fill="#000" stroke="none" stroke-width="1"/><text x="1054.0" y="450.7" font-size="9.3">J8</text><rect x="1199.1" y="460.8" width="27.6" height="13.4" fill="#fff" stroke="#8c8c8c" stroke-width="1.1"/><rect x="1202.1" y="461.5" width="21.6" height="12.0" fill="#000" stroke="none" stroke-width="1"/><text x="1202.0" y="457.3" font-size="9.3">TP30</text><rect x="1199.1" y="507.8" width="23.0" height="10.4" fill="#fff" stroke="#8c8c8c" stroke-width="1.2"/><rect x="1200.8" y="509.3" width="9.0" height="7.4" fill="#000" stroke="none" stroke-width="1"/><rect x="1211.4" y="509.3" width="9.0" height="7.4" fill="#000" stroke="none" stroke-width="1"/><text x="1204.6" y="504.0" font-size="9.3">C2</text><rect x="1409.8" y="461.0" width="19.7" height="19.2" fill="#fff" stroke="#666" stroke-width="1"/><circle cx="1419.7" cy="470.6" r="9.8" fill="#000"/><text x="1409.6" y="457.8" font-size="9.3">MH3</text><rect x="1414.5" y="491.3" width="7.8" height="7.9" fill="none" stroke="#999" stroke-width="0.8"/><path d="M1418.4 490.8 V499.7 M1414 495.25 H1422.8" stroke="#000" stroke-width="1.2"/><text x="1414.0" y="489.0" font-size="5.5" fill="#555">FM1</text><rect x="1027.2" y="511.8" width="9.3" height="16.4" fill="#fff" stroke="#8c8c8c" stroke-width="1.2"/><rect x="1028.7" y="513.5" width="6.3" height="5.7" fill="#000" stroke="none" stroke-width="1"/><rect x="1028.7" y="520.8" width="6.3" height="5.7" fill="#000" stroke="none" stroke-width="1"/><text x="1027.0" y="509.5" font-size="5.5" fill="#555">R30</text><rect x="1041.2" y="511.8" width="9.4" height="16.2" fill="#fff" stroke="#8c8c8c" stroke-width="1.2"/><rect x="1042.7" y="513.5" width="6.4" height="5.6" fill="#000" stroke="none" stroke-width="1"/><rect x="1042.7" y="520.7" width="6.4" height="5.6" fill="#000" stroke="none" stroke-width="1"/><rect x="1041.2" y="529.0" width="9.4" height="16.0" fill="#fff" stroke="#8c8c8c" stroke-width="1.2"/><rect x="1042.7" y="530.7" width="6.4" height="5.5" fill="#000" stroke="none" stroke-width="1"/><rect x="1042.7" y="537.8" width="6.4" height="5.5" fill="#000" stroke="none" stroke-width="1"/><rect x="1051.6" y="511.8" width="9.4" height="16.2" fill="#fff" stroke="#8c8c8c" stroke-width="1.2"/><rect x="1053.1" y="513.5" width="6.4" height="5.6" fill="#000" stroke="none" stroke-width="1"/><rect x="1053.1" y="520.7" width="6.4" height="5.6" fill="#000" stroke="none" stroke-width="1"/><rect x="1051.6" y="529.0" width="9.4" height="16.0" fill="#fff" stroke="#8c8c8c" stroke-width="1.2"/><rect x="1053.1" y="530.7" width="6.4" height="5.5" fill="#000" stroke="none" stroke-width="1"/><rect x="1053.1" y="537.8" width="6.4" height="5.5" fill="#000" stroke="none" stroke-width="1"/><rect x="1062.0" y="511.8" width="9.4" height="16.2" fill="#fff" stroke="#8c8c8c" stroke-width="1.2"/><rect x="1063.5" y="513.5" width="6.4" height="5.6" fill="#000" stroke="none" stroke-width="1"/><rect x="1063.5" y="520.7" width="6.4" height="5.6" fill="#000" stroke="none" stroke-width="1"/><rect x="1062.0" y="529.0" width="9.4" height="16.0" fill="#fff" stroke="#8c8c8c" stroke-width="1.2"/><rect x="1063.5" y="530.7" width="6.4" height="5.5" fill="#000" stroke="none" stroke-width="1"/><rect x="1063.5" y="537.8" width="6.4" height="5.5" fill="#000" stroke="none" stroke-width="1"/><rect x="1072.4" y="511.8" width="9.4" height="16.2" fill="#fff" stroke="#8c8c8c" stroke-width="1.2"/><rect x="1073.9" y="513.5" width="6.4" height="5.6" fill="#000" stroke="none" stroke-width="1"/><rect x="1073.9" y="520.7" width="6.4" height="5.6" fill="#000" stroke="none" stroke-width="1"/><rect x="1072.4" y="529.0" width="9.4" height="16.0" fill="#fff" stroke="#8c8c8c" stroke-width="1.2"/><rect x="1073.9" y="530.7" width="6.4" height="5.5" fill="#000" stroke="none" stroke-width="1"/><rect x="1073.9" y="537.8" width="6.4" height="5.5" fill="#000" stroke="none" stroke-width="1"/><text x="1041.0" y="509.5" font-size="5.5" fill="#555">R19R18R17R16</text><text x="1041.0" y="551.0" font-size="5.5" fill="#555">C23C22C21</text><text x="1091.5" y="545" font-size="9.3" transform="rotate(-90 1091.5 545)">C20</text><rect x="1024.2" y="547.2" width="16.0" height="6.3" fill="#fff" stroke="#8c8c8c" stroke-width="1.2"/><rect x="1025.9" y="548.7" width="5.5" height="3.3" fill="#000" stroke="none" stroke-width="1"/><rect x="1033.0" y="548.7" width="5.5" height="3.3" fill="#000" stroke="none" stroke-width="1"/><text x="1023.7" y="543.3" font-size="9.3">C53</text><rect x="1019.8" y="553.8" width="20.3" height="28.4" fill="none" stroke="#555" stroke-width="1"/><rect x="1023.4" y="558.0" width="4.0" height="7.0" fill="#000" stroke="none" stroke-width="1"/><rect x="1028.0" y="558.0" width="4.0" height="7.0" fill="#000" stroke="none" stroke-width="1"/><rect x="1032.7" y="558.0" width="4.0" height="7.0" fill="#000" stroke="none" stroke-width="1"/><rect x="1023.4" y="572.0" width="4.0" height="7.0" fill="#000" stroke="none" stroke-width="1"/><rect x="1028.0" y="572.0" width="4.0" height="7.0" fill="#000" stroke="none" stroke-width="1"/><rect x="1032.7" y="572.0" width="4.0" height="7.0" fill="#000" stroke="none" stroke-width="1"/><text x="1001.0" y="571.0" font-size="9.3">U22</text><rect x="1024.7" y="585.9" width="14.4" height="28.3" fill="none" stroke="#333" stroke-width="1"/><circle cx="1032.0" cy="592.7" r="4.5" fill="#000"/><rect x="1027.0" y="602.3" width="9.5" height="8.7" fill="#000" stroke="none" stroke-width="1"/><text x="1008.0" y="602.7" font-size="9.3">J14</text><rect x="1042.8" y="562.8" width="31.4" height="42.1" fill="none" stroke="#555" stroke-width="1"/><rect x="1043.6" y="562.3" width="2.3" height="10.0" fill="#000" stroke="none" stroke-width="1"/><rect x="1047.0" y="562.3" width="2.3" height="10.0" fill="#000" stroke="none" stroke-width="1"/><rect x="1050.4" y="562.3" width="2.3" height="10.0" fill="#000" stroke="none" stroke-width="1"/><rect x="1053.9" y="562.3" width="2.3" height="10.0" fill="#000" stroke="none" stroke-width="1"/><rect x="1057.3" y="562.3" width="2.3" height="10.0" fill="#000" stroke="none" stroke-width="1"/><rect x="1060.8" y="562.3" width="2.3" height="10.0" fill="#000" stroke="none" stroke-width="1"/><rect x="1064.2" y="562.3" width="2.3" height="10.0" fill="#000" stroke="none" stroke-width="1"/><rect x="1067.7" y="562.3" width="2.3" height="10.0" fill="#000" stroke="none" stroke-width="1"/><rect x="1071.1" y="562.3" width="2.3" height="10.0" fill="#000" stroke="none" stroke-width="1"/><rect x="1043.6" y="594.7" width="2.3" height="10.7" fill="#000" stroke="none" stroke-width="1"/><rect x="1047.0" y="594.7" width="2.3" height="10.7" fill="#000" stroke="none" stroke-width="1"/><rect x="1050.4" y="594.7" width="2.3" height="10.7" fill="#000" stroke="none" stroke-width="1"/><rect x="1053.9" y="594.7" width="2.3" height="10.7" fill="#000" stroke="none" stroke-width="1"/><rect x="1057.3" y="594.7" width="2.3" height="10.7" fill="#000" stroke="none" stroke-width="1"/><rect x="1060.8" y="594.7" width="2.3" height="10.7" fill="#000" stroke="none" stroke-width="1"/><rect x="1064.2" y="594.7" width="2.3" height="10.7" fill="#000" stroke="none" stroke-width="1"/><rect x="1067.7" y="594.7" width="2.3" height="10.7" fill="#000" stroke="none" stroke-width="1"/><rect x="1071.1" y="594.7" width="2.3" height="10.7" fill="#000" stroke="none" stroke-width="1"/><text x="1052.7" y="587.0" font-size="9.3">U7</text><rect x="1074.2" y="568.8" width="13.0" height="27.0" fill="#fff" stroke="#8c8c8c" stroke-width="1.1"/><rect x="1074.9" y="571.8" width="11.6" height="21.0" fill="#000" stroke="none" stroke-width="1"/><text x="1084" y="568" font-size="9.3" transform="rotate(-90 1084 568)">TP1</text><rect x="1062.2" y="608.8" width="15.9" height="9.0" fill="#fff" stroke="#8c8c8c" stroke-width="1.2"/><rect x="1063.9" y="610.3" width="5.4" height="6.0" fill="#000" stroke="none" stroke-width="1"/><rect x="1070.9" y="610.3" width="5.4" height="6.0" fill="#000" stroke="none" stroke-width="1"/><text x="1045.3" y="615.6" font-size="9.3">C35</text><rect x="1119.8" y="527.8" width="16.3" height="8.7" fill="#fff" stroke="#8c8c8c" stroke-width="1.2"/><rect x="1121.5" y="529.3" width="5.6" height="5.7" fill="#000" stroke="none" stroke-width="1"/><rect x="1128.8" y="529.3" width="5.6" height="5.7" fill="#000" stroke="none" stroke-width="1"/><text x="1119.6" y="524.0" font-size="9.3">R33</text><rect x="1097.8" y="553.8" width="16.7" height="8.7" fill="#fff" stroke="#8c8c8c" stroke-width="1.2"/><rect x="1099.5" y="555.3" width="5.9" height="5.7" fill="#000" stroke="none" stroke-width="1"/><rect x="1106.9" y="555.3" width="5.9" height="5.7" fill="#000" stroke="none" stroke-width="1"/><text x="1097.7" y="550.0" font-size="9.3">R32</text><rect x="1097.1" y="582.8" width="15.7" height="9.0" fill="#fff" stroke="#8c8c8c" stroke-width="1.2"/><rect x="1098.8" y="584.3" width="5.4" height="6.0" fill="#000" stroke="none" stroke-width="1"/><rect x="1105.8" y="584.3" width="5.4" height="6.0" fill="#000" stroke="none" stroke-width="1"/><text x="1098.6" y="579.7" font-size="9.3">R3</text><rect x="1169.8" y="553.2" width="10.0" height="43.0" fill="#fff" stroke="#8c8c8c" stroke-width="1.2"/><rect x="1171.8" y="555.5" width="6.2" height="6.0" fill="#000" stroke="none" stroke-width="1"/><rect x="1171.8" y="563.7" width="6.2" height="6.0" fill="#000" stroke="none" stroke-width="1"/><rect x="1171.8" y="571.9" width="6.2" height="6.0" fill="#000" stroke="none" stroke-width="1"/><rect x="1171.8" y="580.1" width="6.2" height="6.0" fill="#000" stroke="none" stroke-width="1"/><rect x="1171.8" y="588.3" width="6.2" height="6.0" fill="#000" stroke="none" stroke-width="1"/><text x="1170.0" y="550.0" font-size="9.3">C1</text><text x="1157.3" y="581.7" font-size="9.3">R1</text><text x="1181.3" y="598.3" font-size="9.3">R2</text><text x="1164" y="610" font-size="9.3" transform="rotate(-90 1164 610)">TP33</text><rect x="1147.1" y="610.8" width="27.0" height="13.0" fill="#fff" stroke="#8c8c8c" stroke-width="1.1"/><rect x="1150.1" y="611.5" width="21.0" height="11.6" fill="#000" stroke="none" stroke-width="1"/><rect x="1178.5" y="613.5" width="15.6" height="8.3" fill="#fff" stroke="#8c8c8c" stroke-width="1.2"/><rect x="1180.2" y="615.0" width="5.3" height="5.3" fill="#000" stroke="none" stroke-width="1"/><rect x="1187.1" y="615.0" width="5.3" height="5.3" fill="#000" stroke="none" stroke-width="1"/><text x="1192.0" y="621.0" font-size="9.3">C37</text><rect x="1203.8" y="542.5" width="11.7" height="25.0" fill="#fff" stroke="#8c8c8c" stroke-width="1.2"/><rect x="1205.3" y="544.2" width="8.7" height="10.0" fill="#000" stroke="none" stroke-width="1"/><rect x="1205.3" y="555.8" width="8.7" height="10.0" fill="#000" stroke="none" stroke-width="1"/><text x="1204.0" y="540.0" font-size="5.5" fill="#555">C25</text><rect x="1218.7" y="540.5" width="19.3" height="27.3" fill="none" stroke="#555" stroke-width="1"/><rect x="1221.4" y="545.0" width="4.2" height="7.0" fill="#000" stroke="none" stroke-width="1"/><rect x="1226.4" y="545.0" width="4.2" height="7.0" fill="#000" stroke="none" stroke-width="1"/><rect x="1231.4" y="545.0" width="4.2" height="7.0" fill="#000" stroke="none" stroke-width="1"/><rect x="1221.4" y="559.0" width="4.2" height="7.0" fill="#000" stroke="none" stroke-width="1"/><rect x="1226.4" y="559.0" width="4.2" height="7.0" fill="#000" stroke="none" stroke-width="1"/><rect x="1231.4" y="559.0" width="4.2" height="7.0" fill="#000" stroke="none" stroke-width="1"/><text x="1219.5" y="536.6" font-size="9.3">U10</text><rect x="1240.5" y="546.1" width="11.8" height="21.6" fill="#fff" stroke="#8c8c8c" stroke-width="1.2"/><rect x="1242.0" y="547.8" width="8.8" height="8.3" fill="#000" stroke="none" stroke-width="1"/><rect x="1242.0" y="557.7" width="8.8" height="8.3" fill="#000" stroke="none" stroke-width="1"/><text x="1240.0" y="541.0" font-size="5.5" fill="#555">C24</text><rect x="1256.5" y="542.2" width="26.8" height="27.6" fill="none" stroke="#555" stroke-width="1"/><rect x="1264.0" y="545.0" width="9.0" height="5.0" fill="#000" stroke="none" stroke-width="1"/><rect x="1264.0" y="562.0" width="9.0" height="5.0" fill="#000" stroke="none" stroke-width="1"/><text x="1264.5" y="539.0" font-size="9.3">L1</text><rect x="1212.5" y="570.8" width="15.6" height="9.0" fill="#fff" stroke="#8c8c8c" stroke-width="1.2"/><rect x="1214.2" y="572.3" width="5.3" height="6.0" fill="#000" stroke="none" stroke-width="1"/><rect x="1221.1" y="572.3" width="5.3" height="6.0" fill="#000" stroke="none" stroke-width="1"/><rect x="1229.1" y="570.8" width="16.9" height="9.0" fill="#fff" stroke="#8c8c8c" stroke-width="1.2"/><rect x="1230.8" y="572.3" width="6.0" height="6.0" fill="#000" stroke="none" stroke-width="1"/><rect x="1238.3" y="572.3" width="6.0" height="6.0" fill="#000" stroke="none" stroke-width="1"/><text x="1195.6" y="578.7" font-size="9.3">R22</text><text x="1229.6" y="589.0" font-size="9.3">R23</text><rect x="1313.2" y="546.8" width="15.9" height="9.7" fill="#fff" stroke="#8c8c8c" stroke-width="1.2"/><rect x="1314.9" y="548.3" width="5.4" height="6.7" fill="#000" stroke="none" stroke-width="1"/><rect x="1321.9" y="548.3" width="5.4" height="6.7" fill="#000" stroke="none" stroke-width="1"/><rect x="1313.2" y="557.5" width="15.9" height="9.7" fill="#fff" stroke="#8c8c8c" stroke-width="1.2"/><rect x="1314.9" y="559.0" width="5.4" height="6.7" fill="#000" stroke="none" stroke-width="1"/><rect x="1321.9" y="559.0" width="5.4" height="6.7" fill="#000" stroke="none" stroke-width="1"/><rect x="1313.2" y="568.2" width="15.9" height="8.6" fill="#fff" stroke="#8c8c8c" stroke-width="1.2"/><rect x="1314.9" y="569.7" width="5.4" height="5.6" fill="#000" stroke="none" stroke-width="1"/><rect x="1321.9" y="569.7" width="5.4" height="5.6" fill="#000" stroke="none" stroke-width="1"/><text x="1315.3" y="543.0" font-size="9.3">R5</text><text x="1301.4" y="564.0" font-size="9.3">R6</text><text x="1301.4" y="574.5" font-size="9.3">R7</text><rect x="1334.3" y="539.5" width="16.0" height="9.0" fill="#fff" stroke="#8c8c8c" stroke-width="1.2"/><rect x="1336.0" y="541.0" width="5.5" height="6.0" fill="#000" stroke="none" stroke-width="1"/><rect x="1343.1" y="541.0" width="5.5" height="6.0" fill="#000" stroke="none" stroke-width="1"/><text x="1335.8" y="535.6" font-size="9.3">C3</text><rect x="1334.0" y="551.1" width="19.8" height="27.6" fill="none" stroke="#777" stroke-width="1"/><rect x="1336.5" y="553.5" width="5.0" height="6.5" fill="#000" stroke="none" stroke-width="1"/><rect x="1347.0" y="553.5" width="4.5" height="6.5" fill="#000" stroke="none" stroke-width="1"/><rect x="1336.4" y="569.0" width="4.5" height="6.0" fill="#000" stroke="none" stroke-width="1"/><rect x="1341.7" y="569.0" width="4.5" height="6.0" fill="#000" stroke="none" stroke-width="1"/><rect x="1347.1" y="569.0" width="4.5" height="6.0" fill="#000" stroke="none" stroke-width="1"/><text x="1355.0" y="568.2" font-size="9.3">U1</text><text x="1370.5" y="568.2" font-size="9.3">R10</text><rect x="1329.8" y="581.1" width="22.1" height="9.9" fill="#fff" stroke="#8c8c8c" stroke-width="1.2"/><rect x="1331.5" y="582.6" width="8.6" height="6.9" fill="#000" stroke="none" stroke-width="1"/><rect x="1341.7" y="582.6" width="8.6" height="6.9" fill="#000" stroke="none" stroke-width="1"/><text x="1316.2" y="589.3" font-size="9.3">C5</text><rect x="1389.5" y="557.5" width="9.0" height="15.6" fill="#fff" stroke="#8c8c8c" stroke-width="1.2"/><rect x="1391.0" y="559.2" width="6.0" height="5.3" fill="#000" stroke="none" stroke-width="1"/><rect x="1391.0" y="566.1" width="6.0" height="5.3" fill="#000" stroke="none" stroke-width="1"/><rect x="1387.5" y="526.8" width="13.4" height="27.4" fill="#fff" stroke="#8c8c8c" stroke-width="1.1"/><rect x="1388.2" y="529.8" width="12.0" height="21.4" fill="#000" stroke="none" stroke-width="1"/><text x="1388.0" y="524.0" font-size="5.5" fill="#555">TP19</text><rect x="1410.8" y="542.8" width="16.4" height="9.3" fill="#fff" stroke="#8c8c8c" stroke-width="1.2"/><rect x="1412.5" y="544.3" width="5.7" height="6.3" fill="#000" stroke="none" stroke-width="1"/><rect x="1419.8" y="544.3" width="5.7" height="6.3" fill="#000" stroke="none" stroke-width="1"/><text x="1409.6" y="539.7" font-size="9.3">C11</text><rect x="1404.8" y="553.9" width="22.3" height="25.1" fill="none" stroke="#777" stroke-width="1"/><rect x="1408.0" y="556.0" width="7.0" height="9.0" fill="#000" stroke="none" stroke-width="1"/><rect x="1418.0" y="556.0" width="7.0" height="9.0" fill="#000" stroke="none" stroke-width="1"/><rect x="1408.0" y="568.0" width="7.0" height="9.0" fill="#000" stroke="none" stroke-width="1"/><rect x="1418.0" y="568.0" width="7.0" height="9.0" fill="#000" stroke="none" stroke-width="1"/><text x="1409.3" y="588.0" font-size="9.3">U3</text><rect x="1406.9" y="592.9" width="20.6" height="28.1" fill="none" stroke="#555" stroke-width="1"/><rect x="1410.3" y="596.0" width="4.0" height="7.0" fill="#000" stroke="none" stroke-width="1"/><rect x="1415.0" y="596.0" width="4.0" height="7.0" fill="#000" stroke="none" stroke-width="1"/><rect x="1419.7" y="596.0" width="4.0" height="7.0" fill="#000" stroke="none" stroke-width="1"/><rect x="1410.3" y="610.0" width="4.0" height="7.0" fill="#000" stroke="none" stroke-width="1"/><rect x="1415.0" y="610.0" width="4.0" height="7.0" fill="#000" stroke="none" stroke-width="1"/><rect x="1419.7" y="610.0" width="4.0" height="7.0" fill="#000" stroke="none" stroke-width="1"/><text x="1428.3" y="609.8" font-size="9.3">U4</text><rect x="1407.5" y="623.7" width="15.3" height="8.1" fill="#fff" stroke="#8c8c8c" stroke-width="1.2"/><rect x="1409.2" y="625.2" width="5.1" height="5.1" fill="#000" stroke="none" stroke-width="1"/><rect x="1415.9" y="625.2" width="5.1" height="5.1" fill="#000" stroke="none" stroke-width="1"/><text x="1408.0" y="641.2" font-size="9.3">C13</text><text x="1360.0" y="595.0" font-size="9.3">U2</text><rect x="1348.1" y="598.5" width="34.8" height="35.5" fill="none" stroke="#555" stroke-width="1"/><rect x="1355.3" y="600.5" width="2.0" height="5.5" fill="#000" stroke="none" stroke-width="1"/><rect x="1358.0" y="600.5" width="2.0" height="5.5" fill="#000" stroke="none" stroke-width="1"/><rect x="1360.6" y="600.5" width="2.0" height="5.5" fill="#000" stroke="none" stroke-width="1"/><rect x="1363.2" y="600.5" width="2.0" height="5.5" fill="#000" stroke="none" stroke-width="1"/><rect x="1365.8" y="600.5" width="2.0" height="5.5" fill="#000" stroke="none" stroke-width="1"/><rect x="1368.5" y="600.5" width="2.0" height="5.5" fill="#000" stroke="none" stroke-width="1"/><rect x="1371.1" y="600.5" width="2.0" height="5.5" fill="#000" stroke="none" stroke-width="1"/><rect x="1373.7" y="600.5" width="2.0" height="5.5" fill="#000" stroke="none" stroke-width="1"/><rect x="1355.3" y="626.5" width="2.0" height="5.5" fill="#000" stroke="none" stroke-width="1"/><rect x="1358.0" y="626.5" width="2.0" height="5.5" fill="#000" stroke="none" stroke-width="1"/><rect x="1360.6" y="626.5" width="2.0" height="5.5" fill="#000" stroke="none" stroke-width="1"/><rect x="1363.2" y="626.5" width="2.0" height="5.5" fill="#000" stroke="none" stroke-width="1"/><rect x="1365.8" y="626.5" width="2.0" height="5.5" fill="#000" stroke="none" stroke-width="1"/><rect x="1368.5" y="626.5" width="2.0" height="5.5" fill="#000" stroke="none" stroke-width="1"/><rect x="1371.1" y="626.5" width="2.0" height="5.5" fill="#000" stroke="none" stroke-width="1"/><rect x="1373.7" y="626.5" width="2.0" height="5.5" fill="#000" stroke="none" stroke-width="1"/><rect x="1350.0" y="608.3" width="5.5" height="2.0" fill="#000" stroke="none" stroke-width="1"/><rect x="1375.5" y="608.3" width="5.5" height="2.0" fill="#000" stroke="none" stroke-width="1"/><rect x="1350.0" y="610.9" width="5.5" height="2.0" fill="#000" stroke="none" stroke-width="1"/><rect x="1375.5" y="610.9" width="5.5" height="2.0" fill="#000" stroke="none" stroke-width="1"/><rect x="1350.0" y="613.5" width="5.5" height="2.0" fill="#000" stroke="none" stroke-width="1"/><rect x="1375.5" y="613.5" width="5.5" height="2.0" fill="#000" stroke="none" stroke-width="1"/><rect x="1350.0" y="616.1" width="5.5" height="2.0" fill="#000" stroke="none" stroke-width="1"/><rect x="1375.5" y="616.1" width="5.5" height="2.0" fill="#000" stroke="none" stroke-width="1"/><rect x="1350.0" y="618.7" width="5.5" height="2.0" fill="#000" stroke="none" stroke-width="1"/><rect x="1375.5" y="618.7" width="5.5" height="2.0" fill="#000" stroke="none" stroke-width="1"/><rect x="1350.0" y="621.3" width="5.5" height="2.0" fill="#000" stroke="none" stroke-width="1"/><rect x="1375.5" y="621.3" width="5.5" height="2.0" fill="#000" stroke="none" stroke-width="1"/><rect x="1350.0" y="623.9" width="5.5" height="2.0" fill="#000" stroke="none" stroke-width="1"/><rect x="1375.5" y="623.9" width="5.5" height="2.0" fill="#000" stroke="none" stroke-width="1"/><rect x="1350.0" y="626.5" width="5.5" height="2.0" fill="#000" stroke="none" stroke-width="1"/><rect x="1375.5" y="626.5" width="5.5" height="2.0" fill="#000" stroke="none" stroke-width="1"/><circle cx="1365.5" cy="616.6" r="3.0" fill="#000"/><rect x="1386.5" y="609.3" width="16.0" height="8.4" fill="#fff" stroke="#8c8c8c" stroke-width="1.2"/><rect x="1388.2" y="610.8" width="5.5" height="5.4" fill="#000" stroke="none" stroke-width="1"/><rect x="1395.3" y="610.8" width="5.5" height="5.4" fill="#000" stroke="none" stroke-width="1"/><rect x="1386.5" y="619.9" width="16.0" height="8.7" fill="#fff" stroke="#8c8c8c" stroke-width="1.2"/><rect x="1388.2" y="621.4" width="5.5" height="5.7" fill="#000" stroke="none" stroke-width="1"/><rect x="1395.3" y="621.4" width="5.5" height="5.7" fill="#000" stroke="none" stroke-width="1"/><text x="1386.0" y="605.6" font-size="9.3">R11</text><text x="1386.0" y="638.0" font-size="9.3">C10</text><rect x="1327.3" y="602.1" width="15.6" height="8.6" fill="#fff" stroke="#8c8c8c" stroke-width="1.2"/><rect x="1329.0" y="603.6" width="5.3" height="5.6" fill="#000" stroke="none" stroke-width="1"/><rect x="1335.9" y="603.6" width="5.3" height="5.6" fill="#000" stroke="none" stroke-width="1"/><rect x="1310.1" y="613.1" width="15.9" height="8.9" fill="#fff" stroke="#8c8c8c" stroke-width="1.2"/><rect x="1311.8" y="614.6" width="5.5" height="5.9" fill="#000" stroke="none" stroke-width="1"/><rect x="1318.8" y="614.6" width="5.5" height="5.9" fill="#000" stroke="none" stroke-width="1"/><text x="1311.3" y="609.0" font-size="9.3">R4</text><rect x="1329.4" y="613.5" width="9.3" height="21.2" fill="#fff" stroke="#8c8c8c" stroke-width="1.2"/><rect x="1330.9" y="615.2" width="6.3" height="8.1" fill="#000" stroke="none" stroke-width="1"/><rect x="1330.9" y="624.9" width="6.3" height="8.1" fill="#000" stroke="none" stroke-width="1"/><rect x="1327.3" y="637.1" width="15.6" height="8.4" fill="#fff" stroke="#8c8c8c" stroke-width="1.2"/><rect x="1329.0" y="638.6" width="5.3" height="5.4" fill="#000" stroke="none" stroke-width="1"/><rect x="1335.9" y="638.6" width="5.3" height="5.4" fill="#000" stroke="none" stroke-width="1"/><rect x="1310.5" y="624.8" width="13.2" height="26.8" fill="#fff" stroke="#8c8c8c" stroke-width="1.1"/><rect x="1311.2" y="627.8" width="11.8" height="20.8" fill="#000" stroke="none" stroke-width="1"/><text x="1292.7" y="641.5" font-size="9.3">TP9</text><rect x="1317.7" y="652.5" width="27.2" height="13.0" fill="#fff" stroke="#8c8c8c" stroke-width="1.1"/><rect x="1320.7" y="653.2" width="21.2" height="11.6" fill="#000" stroke="none" stroke-width="1"/><text x="1293.6" y="662.0" font-size="9.3">TP13</text><rect x="1317.7" y="669.5" width="27.2" height="13.4" fill="#fff" stroke="#8c8c8c" stroke-width="1.1"/><rect x="1320.7" y="670.2" width="21.2" height="12.0" fill="#000" stroke="none" stroke-width="1"/><text x="1293.6" y="678.9" font-size="9.3">TP12</text><rect x="1348.1" y="644.1" width="9.3" height="16.0" fill="#fff" stroke="#8c8c8c" stroke-width="1.2"/><rect x="1349.6" y="645.8" width="6.3" height="5.5" fill="#000" stroke="none" stroke-width="1"/><rect x="1349.6" y="652.9" width="6.3" height="5.5" fill="#000" stroke="none" stroke-width="1"/><rect x="1348.1" y="661.1" width="9.3" height="16.0" fill="#fff" stroke="#8c8c8c" stroke-width="1.2"/><rect x="1349.6" y="662.8" width="6.3" height="5.5" fill="#000" stroke="none" stroke-width="1"/><rect x="1349.6" y="669.9" width="6.3" height="5.5" fill="#000" stroke="none" stroke-width="1"/><rect x="1358.4" y="644.1" width="9.3" height="16.0" fill="#fff" stroke="#8c8c8c" stroke-width="1.2"/><rect x="1359.9" y="645.8" width="6.3" height="5.5" fill="#000" stroke="none" stroke-width="1"/><rect x="1359.9" y="652.9" width="6.3" height="5.5" fill="#000" stroke="none" stroke-width="1"/><rect x="1358.4" y="661.1" width="9.3" height="16.0" fill="#fff" stroke="#8c8c8c" stroke-width="1.2"/><rect x="1359.9" y="662.8" width="6.3" height="5.5" fill="#000" stroke="none" stroke-width="1"/><rect x="1359.9" y="669.9" width="6.3" height="5.5" fill="#000" stroke="none" stroke-width="1"/><rect x="1368.8" y="644.1" width="9.3" height="16.0" fill="#fff" stroke="#8c8c8c" stroke-width="1.2"/><rect x="1370.3" y="645.8" width="6.3" height="5.5" fill="#000" stroke="none" stroke-width="1"/><rect x="1370.3" y="652.9" width="6.3" height="5.5" fill="#000" stroke="none" stroke-width="1"/><rect x="1368.8" y="661.1" width="9.3" height="16.0" fill="#fff" stroke="#8c8c8c" stroke-width="1.2"/><rect x="1370.3" y="662.8" width="6.3" height="5.5" fill="#000" stroke="none" stroke-width="1"/><rect x="1370.3" y="669.9" width="6.3" height="5.5" fill="#000" stroke="none" stroke-width="1"/><rect x="1379.1" y="644.1" width="9.3" height="16.0" fill="#fff" stroke="#8c8c8c" stroke-width="1.2"/><rect x="1380.6" y="645.8" width="6.3" height="5.5" fill="#000" stroke="none" stroke-width="1"/><rect x="1380.6" y="652.9" width="6.3" height="5.5" fill="#000" stroke="none" stroke-width="1"/><rect x="1379.1" y="661.1" width="9.3" height="16.0" fill="#fff" stroke="#8c8c8c" stroke-width="1.2"/><rect x="1380.6" y="662.8" width="6.3" height="5.5" fill="#000" stroke="none" stroke-width="1"/><rect x="1380.6" y="669.9" width="6.3" height="5.5" fill="#000" stroke="none" stroke-width="1"/><text x="1369.0" y="640.5" font-size="5.5" fill="#555">C14</text><rect x="1397.8" y="666.5" width="27.2" height="13.2" fill="#fff" stroke="#8c8c8c" stroke-width="1.1"/><rect x="1400.8" y="667.2" width="21.2" height="11.8" fill="#000" stroke="none" stroke-width="1"/><text x="1400.0" y="662.4" font-size="9.3">TP20</text><rect x="1236.7" y="639.8" width="31.6" height="42.5" fill="none" stroke="#333" stroke-width="1"/><rect x="1237.6" y="639.3" width="2.3" height="10.5" fill="#000" stroke="none" stroke-width="1"/><rect x="1241.0" y="639.3" width="2.3" height="10.5" fill="#000" stroke="none" stroke-width="1"/><rect x="1244.4" y="639.3" width="2.3" height="10.5" fill="#000" stroke="none" stroke-width="1"/><rect x="1247.9" y="639.3" width="2.3" height="10.5" fill="#000" stroke="none" stroke-width="1"/><rect x="1251.3" y="639.3" width="2.3" height="10.5" fill="#000" stroke="none" stroke-width="1"/><rect x="1254.8" y="639.3" width="2.3" height="10.5" fill="#000" stroke="none" stroke-width="1"/><rect x="1258.2" y="639.3" width="2.3" height="10.5" fill="#000" stroke="none" stroke-width="1"/><rect x="1261.7" y="639.3" width="2.3" height="10.5" fill="#000" stroke="none" stroke-width="1"/><rect x="1265.1" y="639.3" width="2.3" height="10.5" fill="#000" stroke="none" stroke-width="1"/><rect x="1237.6" y="672.2" width="2.3" height="10.6" fill="#000" stroke="none" stroke-width="1"/><rect x="1241.0" y="672.2" width="2.3" height="10.6" fill="#000" stroke="none" stroke-width="1"/><rect x="1244.4" y="672.2" width="2.3" height="10.6" fill="#000" stroke="none" stroke-width="1"/><rect x="1247.9" y="672.2" width="2.3" height="10.6" fill="#000" stroke="none" stroke-width="1"/><rect x="1251.3" y="672.2" width="2.3" height="10.6" fill="#000" stroke="none" stroke-width="1"/><rect x="1254.8" y="672.2" width="2.3" height="10.6" fill="#000" stroke="none" stroke-width="1"/><rect x="1258.2" y="672.2" width="2.3" height="10.6" fill="#000" stroke="none" stroke-width="1"/><rect x="1261.7" y="672.2" width="2.3" height="10.6" fill="#000" stroke="none" stroke-width="1"/><rect x="1265.1" y="672.2" width="2.3" height="10.6" fill="#000" stroke="none" stroke-width="1"/><text x="1257" y="640" font-size="9.3" transform="rotate(-90 1257 640)">U18</text><rect x="1271.0" y="665.5" width="9.0" height="15.9" fill="#fff" stroke="#8c8c8c" stroke-width="1.2"/><rect x="1272.5" y="667.2" width="6.0" height="5.4" fill="#000" stroke="none" stroke-width="1"/><rect x="1272.5" y="674.2" width="6.0" height="5.4" fill="#000" stroke="none" stroke-width="1"/><text x="1270.0" y="661.0" font-size="5.5" fill="#555">C46</text><rect x="1229.1" y="630.1" width="16.0" height="8.6" fill="#fff" stroke="#8c8c8c" stroke-width="1.2"/><rect x="1230.8" y="631.6" width="5.5" height="5.6" fill="#000" stroke="none" stroke-width="1"/><rect x="1237.9" y="631.6" width="5.5" height="5.6" fill="#000" stroke="none" stroke-width="1"/><text x="1228.3" y="626.6" font-size="9.3">C41</text><rect x="1181.1" y="637.1" width="16.0" height="9.1" fill="#fff" stroke="#8c8c8c" stroke-width="1.2"/><rect x="1182.8" y="638.6" width="5.5" height="6.1" fill="#000" stroke="none" stroke-width="1"/><rect x="1189.9" y="638.6" width="5.5" height="6.1" fill="#000" stroke="none" stroke-width="1"/><text x="1180.6" y="633.6" font-size="9.3">C42</text><rect x="1208.8" y="637.1" width="16.3" height="9.1" fill="#fff" stroke="#8c8c8c" stroke-width="1.2"/><rect x="1210.5" y="638.6" width="5.6" height="6.1" fill="#000" stroke="none" stroke-width="1"/><rect x="1217.8" y="638.6" width="5.6" height="6.1" fill="#000" stroke="none" stroke-width="1"/><text x="1208.6" y="633.6" font-size="9.3">C48</text><rect x="1183.5" y="649.5" width="11.4" height="22.5" fill="none" stroke="#777" stroke-width="1"/><rect x="1184.4" y="649.5" width="1.8" height="7.5" fill="#000" stroke="none" stroke-width="1"/><rect x="1187.0" y="649.5" width="1.8" height="7.5" fill="#000" stroke="none" stroke-width="1"/><rect x="1189.6" y="649.5" width="1.8" height="7.5" fill="#000" stroke="none" stroke-width="1"/><rect x="1192.2" y="649.5" width="1.8" height="7.5" fill="#000" stroke="none" stroke-width="1"/><rect x="1184.4" y="664.5" width="1.8" height="7.5" fill="#000" stroke="none" stroke-width="1"/><rect x="1187.0" y="664.5" width="1.8" height="7.5" fill="#000" stroke="none" stroke-width="1"/><rect x="1189.6" y="664.5" width="1.8" height="7.5" fill="#000" stroke="none" stroke-width="1"/><rect x="1192.2" y="664.5" width="1.8" height="7.5" fill="#000" stroke="none" stroke-width="1"/><rect x="1211.5" y="649.5" width="11.4" height="22.5" fill="none" stroke="#777" stroke-width="1"/><rect x="1212.4" y="649.5" width="1.8" height="7.5" fill="#000" stroke="none" stroke-width="1"/><rect x="1215.0" y="649.5" width="1.8" height="7.5" fill="#000" stroke="none" stroke-width="1"/><rect x="1217.6" y="649.5" width="1.8" height="7.5" fill="#000" stroke="none" stroke-width="1"/><rect x="1220.2" y="649.5" width="1.8" height="7.5" fill="#000" stroke="none" stroke-width="1"/><rect x="1212.4" y="664.5" width="1.8" height="7.5" fill="#000" stroke="none" stroke-width="1"/><rect x="1215.0" y="664.5" width="1.8" height="7.5" fill="#000" stroke="none" stroke-width="1"/><rect x="1217.6" y="664.5" width="1.8" height="7.5" fill="#000" stroke="none" stroke-width="1"/><rect x="1220.2" y="664.5" width="1.8" height="7.5" fill="#000" stroke="none" stroke-width="1"/><text x="1164.9" y="663.6" font-size="9.3">U19</text><text x="1208" y="670" font-size="9.3" transform="rotate(-90 1208 670)">U20</text><rect x="1180.2" y="675.5" width="15.9" height="8.6" fill="#fff" stroke="#8c8c8c" stroke-width="1.2"/><rect x="1181.9" y="677.0" width="5.4" height="5.6" fill="#000" stroke="none" stroke-width="1"/><rect x="1188.9" y="677.0" width="5.4" height="5.6" fill="#000" stroke="none" stroke-width="1"/><text x="1163.0" y="682.5" font-size="9.3">C45</text><rect x="1208.9" y="675.5" width="16.2" height="8.6" fill="#fff" stroke="#8c8c8c" stroke-width="1.2"/><rect x="1210.6" y="677.0" width="5.6" height="5.6" fill="#000" stroke="none" stroke-width="1"/><rect x="1217.8" y="677.0" width="5.6" height="5.6" fill="#000" stroke="none" stroke-width="1"/><text x="1208.5" y="693.5" font-size="9.3">C49</text><rect x="1232.7" y="689.5" width="16.5" height="8.8" fill="#fff" stroke="#8c8c8c" stroke-width="1.2"/><rect x="1234.4" y="691.0" width="5.8" height="5.8" fill="#000" stroke="none" stroke-width="1"/><rect x="1241.8" y="691.0" width="5.8" height="5.8" fill="#000" stroke="none" stroke-width="1"/><rect x="1253.3" y="689.5" width="15.9" height="8.8" fill="#fff" stroke="#8c8c8c" stroke-width="1.2"/><rect x="1255.0" y="691.0" width="5.5" height="5.8" fill="#000" stroke="none" stroke-width="1"/><rect x="1262.0" y="691.0" width="5.5" height="5.8" fill="#000" stroke="none" stroke-width="1"/><text x="1270.4" y="696.8" font-size="9.3">C47</text><rect x="1243.0" y="699.5" width="15.9" height="8.5" fill="#fff" stroke="#8c8c8c" stroke-width="1.2"/><rect x="1244.7" y="701.0" width="5.5" height="5.5" fill="#000" stroke="none" stroke-width="1"/><rect x="1251.8" y="701.0" width="5.5" height="5.5" fill="#000" stroke="none" stroke-width="1"/><text x="1226.4" y="706.6" font-size="9.3">C44</text><rect x="1134.7" y="623.7" width="9.4" height="16.1" fill="#fff" stroke="#8c8c8c" stroke-width="1.2"/><rect x="1136.2" y="625.4" width="6.4" height="5.5" fill="#000" stroke="none" stroke-width="1"/><rect x="1136.2" y="632.5" width="6.4" height="5.5" fill="#000" stroke="none" stroke-width="1"/><text x="1135.0" y="621.0" font-size="5.5" fill="#555">R27</text><text x="1149.3" y="641.0" font-size="9.3">U15</text><rect x="1163.8" y="624.1" width="14.3" height="27.9" fill="none" stroke="#555" stroke-width="1"/><circle cx="1171.3" cy="631.0" r="4.0" fill="#000"/><rect x="1167.0" y="641.0" width="9.0" height="9.0" fill="#000" stroke="none" stroke-width="1"/><rect x="1122.5" y="655.7" width="27.6" height="13.4" fill="#fff" stroke="#8c8c8c" stroke-width="1.1"/><rect x="1125.5" y="656.4" width="21.6" height="12.0" fill="#000" stroke="none" stroke-width="1"/><text x="1125.3" y="652.0" font-size="9.3">TP28</text><rect x="1136.3" y="675.6" width="10.7" height="15.2" fill="#000" stroke="none" stroke-width="1"/><rect x="1139.5" y="681.0" width="4.5" height="5.0" fill="#fff" stroke="none" stroke-width="1"/><text x="1117.6" y="686.0" font-size="9.3">U25</text><rect x="1149.5" y="678.5" width="8.7" height="16.2" fill="#fff" stroke="#8c8c8c" stroke-width="1.2"/><rect x="1151.0" y="680.2" width="5.7" height="5.6" fill="#000" stroke="none" stroke-width="1"/><rect x="1151.0" y="687.4" width="5.7" height="5.6" fill="#000" stroke="none" stroke-width="1"/><text x="1150.0" y="675.5" font-size="5.5" fill="#555">R35</text><rect x="1133.1" y="694.0" width="13.4" height="26.8" fill="#fff" stroke="#8c8c8c" stroke-width="1.1"/><rect x="1133.8" y="697.0" width="12.0" height="20.8" fill="#000" stroke="none" stroke-width="1"/><rect x="1100.5" y="713.0" width="9.3" height="16.3" fill="#fff" stroke="#8c8c8c" stroke-width="1.2"/><rect x="1102.0" y="714.7" width="6.3" height="5.6" fill="#000" stroke="none" stroke-width="1"/><rect x="1102.0" y="721.9" width="6.3" height="5.6" fill="#000" stroke="none" stroke-width="1"/><text x="1100.4" y="710.3" font-size="9.3">D2</text><rect x="1115.2" y="717.1" width="15.7" height="8.8" fill="#fff" stroke="#8c8c8c" stroke-width="1.2"/><rect x="1116.9" y="718.6" width="5.4" height="5.8" fill="#000" stroke="none" stroke-width="1"/><rect x="1123.8" y="718.6" width="5.4" height="5.8" fill="#000" stroke="none" stroke-width="1"/><text x="1114.3" y="713.7" font-size="9.3">C36</text><rect x="1112.9" y="729.5" width="21.0" height="20.6" fill="none" stroke="#777" stroke-width="1"/><rect x="1117.5" y="730.0" width="2.2" height="5.0" fill="#000" stroke="none" stroke-width="1"/><rect x="1120.8" y="730.0" width="2.2" height="5.0" fill="#000" stroke="none" stroke-width="1"/><rect x="1124.0" y="730.0" width="2.2" height="5.0" fill="#000" stroke="none" stroke-width="1"/><rect x="1127.3" y="730.0" width="2.2" height="5.0" fill="#000" stroke="none" stroke-width="1"/><rect x="1117.5" y="745.0" width="2.2" height="5.0" fill="#000" stroke="none" stroke-width="1"/><rect x="1120.8" y="745.0" width="2.2" height="5.0" fill="#000" stroke="none" stroke-width="1"/><rect x="1124.0" y="745.0" width="2.2" height="5.0" fill="#000" stroke="none" stroke-width="1"/><rect x="1127.3" y="745.0" width="2.2" height="5.0" fill="#000" stroke="none" stroke-width="1"/><rect x="1113.0" y="734.0" width="5.0" height="1.5" fill="#000" stroke="none" stroke-width="1"/><rect x="1129.0" y="734.0" width="5.0" height="1.5" fill="#000" stroke="none" stroke-width="1"/><rect x="1113.0" y="736.8" width="5.0" height="1.5" fill="#000" stroke="none" stroke-width="1"/><rect x="1129.0" y="736.8" width="5.0" height="1.5" fill="#000" stroke="none" stroke-width="1"/><rect x="1113.0" y="739.6" width="5.0" height="1.5" fill="#000" stroke="none" stroke-width="1"/><rect x="1129.0" y="739.6" width="5.0" height="1.5" fill="#000" stroke="none" stroke-width="1"/><rect x="1113.0" y="742.4" width="5.0" height="1.5" fill="#000" stroke="none" stroke-width="1"/><rect x="1129.0" y="742.4" width="5.0" height="1.5" fill="#000" stroke="none" stroke-width="1"/><circle cx="1123.0" cy="739.6" r="3.2" fill="#000"/><text x="1094.5" y="743.0" font-size="9.3">U14</text><rect x="1136.0" y="724.0" width="15.9" height="9.5" fill="#fff" stroke="#8c8c8c" stroke-width="1.2"/><rect x="1137.7" y="725.5" width="5.5" height="6.5" fill="#000" stroke="none" stroke-width="1"/><rect x="1144.8" y="725.5" width="5.5" height="6.5" fill="#000" stroke="none" stroke-width="1"/><rect x="1136.0" y="734.5" width="15.9" height="9.0" fill="#fff" stroke="#8c8c8c" stroke-width="1.2"/><rect x="1137.7" y="736.0" width="5.5" height="6.0" fill="#000" stroke="none" stroke-width="1"/><rect x="1144.8" y="736.0" width="5.5" height="6.0" fill="#000" stroke="none" stroke-width="1"/><text x="1135.2" y="753.2" font-size="9.3">R21</text><rect x="1114.8" y="751.8" width="9.1" height="16.2" fill="#fff" stroke="#8c8c8c" stroke-width="1.2"/><rect x="1116.3" y="753.5" width="6.1" height="5.6" fill="#000" stroke="none" stroke-width="1"/><rect x="1116.3" y="760.7" width="6.1" height="5.6" fill="#000" stroke="none" stroke-width="1"/><rect x="1124.9" y="751.8" width="9.0" height="16.2" fill="#fff" stroke="#8c8c8c" stroke-width="1.2"/><rect x="1126.4" y="753.5" width="6.0" height="5.6" fill="#000" stroke="none" stroke-width="1"/><rect x="1126.4" y="760.7" width="6.0" height="5.6" fill="#000" stroke="none" stroke-width="1"/><text x="1096.0" y="763.0" font-size="9.3">R14</text><text x="1125.0" y="773.0" font-size="5.5" fill="#555">R15</text><rect x="1091.3" y="774.3" width="13.7" height="26.8" fill="#fff" stroke="#8c8c8c" stroke-width="1.1"/><rect x="1092.0" y="777.3" width="12.3" height="20.8" fill="#000" stroke="none" stroke-width="1"/><text x="1091.0" y="771.0" font-size="5.5" fill="#555">TP22</text><rect x="1107.9" y="779.7" width="8.4" height="16.1" fill="#fff" stroke="#8c8c8c" stroke-width="1.2"/><rect x="1109.4" y="781.4" width="5.4" height="5.5" fill="#000" stroke="none" stroke-width="1"/><rect x="1109.4" y="788.5" width="5.4" height="5.5" fill="#000" stroke="none" stroke-width="1"/><text x="1107.0" y="777.0" font-size="5.5" fill="#555">R31</text><rect x="1035.6" y="729.9" width="50.8" height="52.2" fill="none" stroke="#333" stroke-width="1"/><circle cx="1054.2" cy="738.2" r="6.0" fill="#000"/><rect x="1052.0" y="740.0" width="4.0" height="8.0" fill="#000" stroke="none" stroke-width="1"/><rect x="1053.4" y="743.0" width="4.5" height="9.7" fill="#000" stroke="none" stroke-width="1"/><rect x="1058.7" y="743.0" width="4.5" height="9.7" fill="#000" stroke="none" stroke-width="1"/><rect x="1064.1" y="743.0" width="4.5" height="9.7" fill="#000" stroke="none" stroke-width="1"/><rect x="1053.4" y="759.7" width="4.5" height="9.3" fill="#000" stroke="none" stroke-width="1"/><rect x="1058.7" y="759.7" width="4.5" height="9.3" fill="#000" stroke="none" stroke-width="1"/><rect x="1064.1" y="759.7" width="4.5" height="9.3" fill="#000" stroke="none" stroke-width="1"/><text x="1055.0" y="726.4" font-size="9.3">D1</text><rect x="1154.8" y="710.1" width="250.1" height="91.6" fill="none" stroke="#444" stroke-width="1"/><text x="1271.0" y="759.5" font-size="9.3">LS1</text><circle cx="1167.5" cy="720.6" r="7.0" fill="#000"/><circle cx="1167.5" cy="791.6" r="7.0" fill="#000"/><circle cx="1337.3" cy="720.3" r="7.0" fill="#000"/><circle cx="1337.3" cy="791.5" r="7.0" fill="#000"/><circle cx="1392.3" cy="745.0" r="4.5" fill="#000"/><circle cx="1392.3" cy="767.0" r="4.5" fill="#000"/><circle cx="1420.5" cy="738.8" r="4.5" fill="#000"/><rect x="1355.2" y="683.5" width="46.9" height="37.5" fill="none" stroke="#555" stroke-width="1"/><rect x="1371.8" y="685.5" width="2.4" height="9.9" fill="#000" stroke="none" stroke-width="1"/><rect x="1375.3" y="685.5" width="2.4" height="9.9" fill="#000" stroke="none" stroke-width="1"/><rect x="1378.8" y="685.5" width="2.4" height="9.9" fill="#000" stroke="none" stroke-width="1"/><rect x="1382.3" y="685.5" width="2.4" height="9.9" fill="#000" stroke="none" stroke-width="1"/><rect x="1371.8" y="708.8" width="2.4" height="9.2" fill="#000" stroke="none" stroke-width="1"/><rect x="1375.3" y="708.8" width="2.4" height="9.2" fill="#000" stroke="none" stroke-width="1"/><rect x="1378.8" y="708.8" width="2.4" height="9.2" fill="#000" stroke="none" stroke-width="1"/><rect x="1382.3" y="708.8" width="2.4" height="9.2" fill="#000" stroke="none" stroke-width="1"/><text x="1342.0" y="705.0" font-size="9.3">U5</text><rect x="1367.9" y="727.6" width="16.5" height="9.6" fill="#fff" stroke="#8c8c8c" stroke-width="1.2"/><rect x="1369.6" y="729.1" width="5.8" height="6.6" fill="#000" stroke="none" stroke-width="1"/><rect x="1377.0" y="729.1" width="5.8" height="6.6" fill="#000" stroke="none" stroke-width="1"/><rect x="1359.7" y="777.6" width="27.5" height="13.4" fill="#fff" stroke="#8c8c8c" stroke-width="1.1"/><rect x="1362.7" y="778.3" width="21.5" height="12.0" fill="#000" stroke="none" stroke-width="1"/><rect x="1409.7" y="773.7" width="19.5" height="19.2" fill="#fff" stroke="#666" stroke-width="1"/><circle cx="1419.5" cy="783.3" r="9.7" fill="#000"/><text x="1410.0" y="801.8" font-size="9.3">MH2</text><rect x="1414.7" y="755.8" width="7.4" height="8.2" fill="none" stroke="#999" stroke-width="0.8"/><path d="M1418.4 755.3 V764.5 M1414.2 759.9 H1422.6" stroke="#000" stroke-width="1.2"/><text x="1414.0" y="753.5" font-size="5.5" fill="#555">FM2</text><rect x="689.2" y="577.9" width="9.3" height="15.2" fill="#fff" stroke="#8c8c8c" stroke-width="1.2"/><rect x="690.7" y="579.6" width="6.3" height="5.1" fill="#000" stroke="none" stroke-width="1"/><rect x="690.7" y="586.3" width="6.3" height="5.1" fill="#000" stroke="none" stroke-width="1"/><text x="689.0" y="575.0" font-size="5.5" fill="#555">C51</text><rect x="701.5" y="565.5" width="37.6" height="42.6" fill="none" stroke="#222" stroke-width="1"/><rect x="702.0" y="565.5" width="2.3" height="10.5" fill="#000" stroke="none" stroke-width="1"/><rect x="705.5" y="565.5" width="2.3" height="10.5" fill="#000" stroke="none" stroke-width="1"/><rect x="708.9" y="565.5" width="2.3" height="10.5" fill="#000" stroke="none" stroke-width="1"/><rect x="712.3" y="565.5" width="2.3" height="10.5" fill="#000" stroke="none" stroke-width="1"/><rect x="715.7" y="565.5" width="2.3" height="10.5" fill="#000" stroke="none" stroke-width="1"/><rect x="719.1" y="565.5" width="2.3" height="10.5" fill="#000" stroke="none" stroke-width="1"/><rect x="722.5" y="565.5" width="2.3" height="10.5" fill="#000" stroke="none" stroke-width="1"/><rect x="725.9" y="565.5" width="2.3" height="10.5" fill="#000" stroke="none" stroke-width="1"/><rect x="729.3" y="565.5" width="2.3" height="10.5" fill="#000" stroke="none" stroke-width="1"/><rect x="732.7" y="565.5" width="2.3" height="10.5" fill="#000" stroke="none" stroke-width="1"/><rect x="736.1" y="565.5" width="2.3" height="10.5" fill="#000" stroke="none" stroke-width="1"/><rect x="702.0" y="598.0" width="2.3" height="10.5" fill="#000" stroke="none" stroke-width="1"/><rect x="705.5" y="598.0" width="2.3" height="10.5" fill="#000" stroke="none" stroke-width="1"/><rect x="708.9" y="598.0" width="2.3" height="10.5" fill="#000" stroke="none" stroke-width="1"/><rect x="712.3" y="598.0" width="2.3" height="10.5" fill="#000" stroke="none" stroke-width="1"/><rect x="715.7" y="598.0" width="2.3" height="10.5" fill="#000" stroke="none" stroke-width="1"/><rect x="719.1" y="598.0" width="2.3" height="10.5" fill="#000" stroke="none" stroke-width="1"/><rect x="722.5" y="598.0" width="2.3" height="10.5" fill="#000" stroke="none" stroke-width="1"/><rect x="725.9" y="598.0" width="2.3" height="10.5" fill="#000" stroke="none" stroke-width="1"/><rect x="729.3" y="598.0" width="2.3" height="10.5" fill="#000" stroke="none" stroke-width="1"/><rect x="732.7" y="598.0" width="2.3" height="10.5" fill="#000" stroke="none" stroke-width="1"/><rect x="736.1" y="598.0" width="2.3" height="10.5" fill="#000" stroke="none" stroke-width="1"/><rect x="701.0" y="565.0" width="38.6" height="11.0" fill="none" stroke="#000" stroke-width="1"/><rect x="701.0" y="597.6" width="38.6" height="11.0" fill="none" stroke="#000" stroke-width="1"/><text x="711.3" y="590.3" font-size="9.3">U21</text><rect x="740.5" y="577.5" width="8.0" height="16.0" fill="#fff" stroke="#8c8c8c" stroke-width="1.2"/><rect x="742.0" y="579.2" width="5.0" height="5.5" fill="#000" stroke="none" stroke-width="1"/><rect x="742.0" y="586.3" width="5.0" height="5.5" fill="#000" stroke="none" stroke-width="1"/><text x="740.0" y="575.5" font-size="5.5" fill="#555">C52</text><rect x="749.8" y="564.6" width="45.5" height="42.0" fill="#fff" stroke="#8c8c8c" stroke-width="1.2"/><rect x="752.4" y="566.7" width="2.4" height="10.3" fill="#000" stroke="none" stroke-width="1"/><rect x="755.8" y="566.7" width="2.4" height="10.3" fill="#000" stroke="none" stroke-width="1"/><rect x="759.3" y="566.7" width="2.4" height="10.3" fill="#000" stroke="none" stroke-width="1"/><rect x="762.7" y="566.7" width="2.4" height="10.3" fill="#000" stroke="none" stroke-width="1"/><rect x="766.2" y="566.7" width="2.4" height="10.3" fill="#000" stroke="none" stroke-width="1"/><rect x="769.6" y="566.7" width="2.4" height="10.3" fill="#000" stroke="none" stroke-width="1"/><rect x="773.1" y="566.7" width="2.4" height="10.3" fill="#000" stroke="none" stroke-width="1"/><rect x="776.6" y="566.7" width="2.4" height="10.3" fill="#000" stroke="none" stroke-width="1"/><rect x="780.0" y="566.7" width="2.4" height="10.3" fill="#000" stroke="none" stroke-width="1"/><rect x="783.5" y="566.7" width="2.4" height="10.3" fill="#000" stroke="none" stroke-width="1"/><rect x="786.9" y="566.7" width="2.4" height="10.3" fill="#000" stroke="none" stroke-width="1"/><rect x="790.4" y="566.7" width="2.4" height="10.3" fill="#000" stroke="none" stroke-width="1"/><rect x="752.4" y="595.0" width="2.4" height="11.3" fill="#000" stroke="none" stroke-width="1"/><rect x="755.8" y="595.0" width="2.4" height="11.3" fill="#000" stroke="none" stroke-width="1"/><rect x="759.3" y="595.0" width="2.4" height="11.3" fill="#000" stroke="none" stroke-width="1"/><rect x="762.7" y="595.0" width="2.4" height="11.3" fill="#000" stroke="none" stroke-width="1"/><rect x="766.2" y="595.0" width="2.4" height="11.3" fill="#000" stroke="none" stroke-width="1"/><rect x="769.6" y="595.0" width="2.4" height="11.3" fill="#000" stroke="none" stroke-width="1"/><rect x="773.1" y="595.0" width="2.4" height="11.3" fill="#000" stroke="none" stroke-width="1"/><rect x="776.6" y="595.0" width="2.4" height="11.3" fill="#000" stroke="none" stroke-width="1"/><rect x="780.0" y="595.0" width="2.4" height="11.3" fill="#000" stroke="none" stroke-width="1"/><rect x="783.5" y="595.0" width="2.4" height="11.3" fill="#000" stroke="none" stroke-width="1"/><rect x="786.9" y="595.0" width="2.4" height="11.3" fill="#000" stroke="none" stroke-width="1"/><rect x="790.4" y="595.0" width="2.4" height="11.3" fill="#000" stroke="none" stroke-width="1"/><rect x="809.1" y="564.6" width="45.5" height="42.0" fill="#fff" stroke="#8c8c8c" stroke-width="1.2"/><rect x="811.7" y="566.7" width="2.4" height="10.3" fill="#000" stroke="none" stroke-width="1"/><rect x="815.1" y="566.7" width="2.4" height="10.3" fill="#000" stroke="none" stroke-width="1"/><rect x="818.6" y="566.7" width="2.4" height="10.3" fill="#000" stroke="none" stroke-width="1"/><rect x="822.0" y="566.7" width="2.4" height="10.3" fill="#000" stroke="none" stroke-width="1"/><rect x="825.5" y="566.7" width="2.4" height="10.3" fill="#000" stroke="none" stroke-width="1"/><rect x="828.9" y="566.7" width="2.4" height="10.3" fill="#000" stroke="none" stroke-width="1"/><rect x="832.4" y="566.7" width="2.4" height="10.3" fill="#000" stroke="none" stroke-width="1"/><rect x="835.9" y="566.7" width="2.4" height="10.3" fill="#000" stroke="none" stroke-width="1"/><rect x="839.3" y="566.7" width="2.4" height="10.3" fill="#000" stroke="none" stroke-width="1"/><rect x="842.8" y="566.7" width="2.4" height="10.3" fill="#000" stroke="none" stroke-width="1"/><rect x="846.2" y="566.7" width="2.4" height="10.3" fill="#000" stroke="none" stroke-width="1"/><rect x="849.7" y="566.7" width="2.4" height="10.3" fill="#000" stroke="none" stroke-width="1"/><rect x="811.7" y="595.0" width="2.4" height="11.3" fill="#000" stroke="none" stroke-width="1"/><rect x="815.1" y="595.0" width="2.4" height="11.3" fill="#000" stroke="none" stroke-width="1"/><rect x="818.6" y="595.0" width="2.4" height="11.3" fill="#000" stroke="none" stroke-width="1"/><rect x="822.0" y="595.0" width="2.4" height="11.3" fill="#000" stroke="none" stroke-width="1"/><rect x="825.5" y="595.0" width="2.4" height="11.3" fill="#000" stroke="none" stroke-width="1"/><rect x="828.9" y="595.0" width="2.4" height="11.3" fill="#000" stroke="none" stroke-width="1"/><rect x="832.4" y="595.0" width="2.4" height="11.3" fill="#000" stroke="none" stroke-width="1"/><rect x="835.9" y="595.0" width="2.4" height="11.3" fill="#000" stroke="none" stroke-width="1"/><rect x="839.3" y="595.0" width="2.4" height="11.3" fill="#000" stroke="none" stroke-width="1"/><rect x="842.8" y="595.0" width="2.4" height="11.3" fill="#000" stroke="none" stroke-width="1"/><rect x="846.2" y="595.0" width="2.4" height="11.3" fill="#000" stroke="none" stroke-width="1"/><rect x="849.7" y="595.0" width="2.4" height="11.3" fill="#000" stroke="none" stroke-width="1"/><rect x="868.8" y="564.6" width="45.5" height="42.0" fill="#fff" stroke="#8c8c8c" stroke-width="1.2"/><rect x="871.4" y="566.7" width="2.4" height="10.3" fill="#000" stroke="none" stroke-width="1"/><rect x="874.8" y="566.7" width="2.4" height="10.3" fill="#000" stroke="none" stroke-width="1"/><rect x="878.3" y="566.7" width="2.4" height="10.3" fill="#000" stroke="none" stroke-width="1"/><rect x="881.7" y="566.7" width="2.4" height="10.3" fill="#000" stroke="none" stroke-width="1"/><rect x="885.2" y="566.7" width="2.4" height="10.3" fill="#000" stroke="none" stroke-width="1"/><rect x="888.6" y="566.7" width="2.4" height="10.3" fill="#000" stroke="none" stroke-width="1"/><rect x="892.1" y="566.7" width="2.4" height="10.3" fill="#000" stroke="none" stroke-width="1"/><rect x="895.6" y="566.7" width="2.4" height="10.3" fill="#000" stroke="none" stroke-width="1"/><rect x="899.0" y="566.7" width="2.4" height="10.3" fill="#000" stroke="none" stroke-width="1"/><rect x="902.5" y="566.7" width="2.4" height="10.3" fill="#000" stroke="none" stroke-width="1"/><rect x="905.9" y="566.7" width="2.4" height="10.3" fill="#000" stroke="none" stroke-width="1"/><rect x="909.4" y="566.7" width="2.4" height="10.3" fill="#000" stroke="none" stroke-width="1"/><rect x="871.4" y="595.0" width="2.4" height="11.3" fill="#000" stroke="none" stroke-width="1"/><rect x="874.8" y="595.0" width="2.4" height="11.3" fill="#000" stroke="none" stroke-width="1"/><rect x="878.3" y="595.0" width="2.4" height="11.3" fill="#000" stroke="none" stroke-width="1"/><rect x="881.7" y="595.0" width="2.4" height="11.3" fill="#000" stroke="none" stroke-width="1"/><rect x="885.2" y="595.0" width="2.4" height="11.3" fill="#000" stroke="none" stroke-width="1"/><rect x="888.6" y="595.0" width="2.4" height="11.3" fill="#000" stroke="none" stroke-width="1"/><rect x="892.1" y="595.0" width="2.4" height="11.3" fill="#000" stroke="none" stroke-width="1"/><rect x="895.6" y="595.0" width="2.4" height="11.3" fill="#000" stroke="none" stroke-width="1"/><rect x="899.0" y="595.0" width="2.4" height="11.3" fill="#000" stroke="none" stroke-width="1"/><rect x="902.5" y="595.0" width="2.4" height="11.3" fill="#000" stroke="none" stroke-width="1"/><rect x="905.9" y="595.0" width="2.4" height="11.3" fill="#000" stroke="none" stroke-width="1"/><rect x="909.4" y="595.0" width="2.4" height="11.3" fill="#000" stroke="none" stroke-width="1"/><rect x="927.8" y="564.6" width="45.5" height="42.0" fill="#fff" stroke="#8c8c8c" stroke-width="1.2"/><rect x="930.4" y="566.7" width="2.4" height="10.3" fill="#000" stroke="none" stroke-width="1"/><rect x="933.8" y="566.7" width="2.4" height="10.3" fill="#000" stroke="none" stroke-width="1"/><rect x="937.3" y="566.7" width="2.4" height="10.3" fill="#000" stroke="none" stroke-width="1"/><rect x="940.7" y="566.7" width="2.4" height="10.3" fill="#000" stroke="none" stroke-width="1"/><rect x="944.2" y="566.7" width="2.4" height="10.3" fill="#000" stroke="none" stroke-width="1"/><rect x="947.6" y="566.7" width="2.4" height="10.3" fill="#000" stroke="none" stroke-width="1"/><rect x="951.1" y="566.7" width="2.4" height="10.3" fill="#000" stroke="none" stroke-width="1"/><rect x="954.6" y="566.7" width="2.4" height="10.3" fill="#000" stroke="none" stroke-width="1"/><rect x="958.0" y="566.7" width="2.4" height="10.3" fill="#000" stroke="none" stroke-width="1"/><rect x="961.5" y="566.7" width="2.4" height="10.3" fill="#000" stroke="none" stroke-width="1"/><rect x="964.9" y="566.7" width="2.4" height="10.3" fill="#000" stroke="none" stroke-width="1"/><rect x="968.4" y="566.7" width="2.4" height="10.3" fill="#000" stroke="none" stroke-width="1"/><rect x="930.4" y="595.0" width="2.4" height="11.3" fill="#000" stroke="none" stroke-width="1"/><rect x="933.8" y="595.0" width="2.4" height="11.3" fill="#000" stroke="none" stroke-width="1"/><rect x="937.3" y="595.0" width="2.4" height="11.3" fill="#000" stroke="none" stroke-width="1"/><rect x="940.7" y="595.0" width="2.4" height="11.3" fill="#000" stroke="none" stroke-width="1"/><rect x="944.2" y="595.0" width="2.4" height="11.3" fill="#000" stroke="none" stroke-width="1"/><rect x="947.6" y="595.0" width="2.4" height="11.3" fill="#000" stroke="none" stroke-width="1"/><rect x="951.1" y="595.0" width="2.4" height="11.3" fill="#000" stroke="none" stroke-width="1"/><rect x="954.6" y="595.0" width="2.4" height="11.3" fill="#000" stroke="none" stroke-width="1"/><rect x="958.0" y="595.0" width="2.4" height="11.3" fill="#000" stroke="none" stroke-width="1"/><rect x="961.5" y="595.0" width="2.4" height="11.3" fill="#000" stroke="none" stroke-width="1"/><rect x="964.9" y="595.0" width="2.4" height="11.3" fill="#000" stroke="none" stroke-width="1"/><rect x="968.4" y="595.0" width="2.4" height="11.3" fill="#000" stroke="none" stroke-width="1"/><rect x="797.3" y="563.8" width="9.3" height="16.0" fill="#fff" stroke="#8c8c8c" stroke-width="1.2"/><rect x="798.8" y="565.5" width="6.3" height="5.5" fill="#000" stroke="none" stroke-width="1"/><rect x="798.8" y="572.6" width="6.3" height="5.5" fill="#000" stroke="none" stroke-width="1"/><rect x="797.3" y="591.7" width="9.3" height="15.8" fill="#fff" stroke="#8c8c8c" stroke-width="1.2"/><rect x="798.8" y="593.4" width="6.3" height="5.4" fill="#000" stroke="none" stroke-width="1"/><rect x="798.8" y="600.4" width="6.3" height="5.4" fill="#000" stroke="none" stroke-width="1"/><text x="796.8" y="561.5" font-size="5.5" fill="#555">C16</text><text x="796.8" y="589.5" font-size="5.5" fill="#555">C30</text><rect x="856.4" y="563.8" width="9.3" height="16.0" fill="#fff" stroke="#8c8c8c" stroke-width="1.2"/><rect x="857.9" y="565.5" width="6.3" height="5.5" fill="#000" stroke="none" stroke-width="1"/><rect x="857.9" y="572.6" width="6.3" height="5.5" fill="#000" stroke="none" stroke-width="1"/><rect x="856.4" y="591.7" width="9.3" height="15.8" fill="#fff" stroke="#8c8c8c" stroke-width="1.2"/><rect x="857.9" y="593.4" width="6.3" height="5.4" fill="#000" stroke="none" stroke-width="1"/><rect x="857.9" y="600.4" width="6.3" height="5.4" fill="#000" stroke="none" stroke-width="1"/><text x="855.9" y="561.5" font-size="5.5" fill="#555">C17</text><text x="855.9" y="589.5" font-size="5.5" fill="#555">C31</text><rect x="915.8" y="563.8" width="9.3" height="16.0" fill="#fff" stroke="#8c8c8c" stroke-width="1.2"/><rect x="917.3" y="565.5" width="6.3" height="5.5" fill="#000" stroke="none" stroke-width="1"/><rect x="917.3" y="572.6" width="6.3" height="5.5" fill="#000" stroke="none" stroke-width="1"/><rect x="915.8" y="591.7" width="9.3" height="15.8" fill="#fff" stroke="#8c8c8c" stroke-width="1.2"/><rect x="917.3" y="593.4" width="6.3" height="5.4" fill="#000" stroke="none" stroke-width="1"/><rect x="917.3" y="600.4" width="6.3" height="5.4" fill="#000" stroke="none" stroke-width="1"/><text x="915.3" y="561.5" font-size="5.5" fill="#555">C18</text><text x="915.3" y="589.5" font-size="5.5" fill="#555">C32</text><rect x="974.8" y="563.8" width="9.3" height="16.0" fill="#fff" stroke="#8c8c8c" stroke-width="1.2"/><rect x="976.3" y="565.5" width="6.3" height="5.5" fill="#000" stroke="none" stroke-width="1"/><rect x="976.3" y="572.6" width="6.3" height="5.5" fill="#000" stroke="none" stroke-width="1"/><rect x="974.8" y="591.7" width="9.3" height="15.8" fill="#fff" stroke="#8c8c8c" stroke-width="1.2"/><rect x="976.3" y="593.4" width="6.3" height="5.4" fill="#000" stroke="none" stroke-width="1"/><rect x="976.3" y="600.4" width="6.3" height="5.4" fill="#000" stroke="none" stroke-width="1"/><text x="974.3" y="561.5" font-size="5.5" fill="#555">C19</text><text x="974.3" y="589.5" font-size="5.5" fill="#555">C33</text><text x="766.2" y="561.7" font-size="9.3">U6</text><text x="825.3" y="561.7" font-size="9.3">U8</text><text x="884.7" y="561.7" font-size="9.3">U9</text><text x="941.3" y="561.7" font-size="9.3">U11</text><rect x="709.8" y="508.5" width="16.4" height="8.3" fill="#fff" stroke="#8c8c8c" stroke-width="1.2"/><rect x="711.5" y="510.0" width="5.7" height="5.3" fill="#000" stroke="none" stroke-width="1"/><rect x="718.8" y="510.0" width="5.7" height="5.3" fill="#000" stroke="none" stroke-width="1"/><text x="706" y="518" font-size="5.5" fill="#555" transform="rotate(-90 706 518)">C29</text><rect x="683.8" y="520.1" width="13.4" height="26.7" fill="#fff" stroke="#8c8c8c" stroke-width="1.1"/><rect x="684.5" y="523.1" width="12.0" height="20.7" fill="#000" stroke="none" stroke-width="1"/><text x="684.0" y="517.5" font-size="5.5" fill="#555">TP31</text><rect x="702.8" y="519.2" width="20.3" height="27.6" fill="none" stroke="#666" stroke-width="1"/><rect x="706.4" y="523.0" width="4.2" height="7.0" fill="#000" stroke="none" stroke-width="1"/><rect x="711.4" y="523.0" width="4.2" height="7.0" fill="#000" stroke="none" stroke-width="1"/><rect x="716.4" y="523.0" width="4.2" height="7.0" fill="#000" stroke="none" stroke-width="1"/><rect x="706.4" y="537.0" width="4.2" height="7.0" fill="#000" stroke="none" stroke-width="1"/><rect x="711.4" y="537.0" width="4.2" height="7.0" fill="#000" stroke="none" stroke-width="1"/><rect x="716.4" y="537.0" width="4.2" height="7.0" fill="#000" stroke="none" stroke-width="1"/><text x="724.0" y="536.3" font-size="9.3">U13</text><rect x="706.8" y="547.2" width="16.7" height="8.3" fill="#fff" stroke="#8c8c8c" stroke-width="1.2"/><rect x="708.5" y="548.7" width="5.9" height="5.3" fill="#000" stroke="none" stroke-width="1"/><rect x="715.9" y="548.7" width="5.9" height="5.3" fill="#000" stroke="none" stroke-width="1"/><text x="724.6" y="554.0" font-size="9.3">C34</text><rect x="739.5" y="617.8" width="13.7" height="27.3" fill="#fff" stroke="#8c8c8c" stroke-width="1.1"/><rect x="740.2" y="620.8" width="12.3" height="21.3" fill="#000" stroke="none" stroke-width="1"/><text x="740.0" y="614.3" font-size="9.3">TP4</text><rect x="715.1" y="621.1" width="13.0" height="26.7" fill="#fff" stroke="#8c8c8c" stroke-width="1.1"/><rect x="715.8" y="624.1" width="11.6" height="20.7" fill="#000" stroke="none" stroke-width="1"/><text x="715.6" y="618.0" font-size="5.5" fill="#555">TP41</text><rect x="711.8" y="645.9" width="13.4" height="26.6" fill="#fff" stroke="#8c8c8c" stroke-width="1.1"/><rect x="712.5" y="648.9" width="12.0" height="20.6" fill="#000" stroke="none" stroke-width="1"/><text x="687.3" y="662.3" font-size="9.3">TP38</text><rect x="711.7" y="670.0" width="13.5" height="27.0" fill="#fff" stroke="#8c8c8c" stroke-width="1.1"/><rect x="712.4" y="673.0" width="12.1" height="21.0" fill="#000" stroke="none" stroke-width="1"/><text x="693.3" y="687.0" font-size="9.3">TP6</text><rect x="739.5" y="676.8" width="13.9" height="27.2" fill="#fff" stroke="#8c8c8c" stroke-width="1.1"/><rect x="740.2" y="679.8" width="12.5" height="21.2" fill="#000" stroke="none" stroke-width="1"/><text x="740.0" y="674.0" font-size="5.5" fill="#555">TP39</text><rect x="690.7" y="700.8" width="13.8" height="27.2" fill="#fff" stroke="#8c8c8c" stroke-width="1.1"/><rect x="691.4" y="703.8" width="12.4" height="21.2" fill="#000" stroke="none" stroke-width="1"/><text x="691.0" y="698.0" font-size="5.5" fill="#555">TP36</text><rect x="693.8" y="753.4" width="27.6" height="13.4" fill="#fff" stroke="#8c8c8c" stroke-width="1.1"/><rect x="696.8" y="754.1" width="21.6" height="12.0" fill="#000" stroke="none" stroke-width="1"/><text x="696.0" y="749.6" font-size="9.3">TP37</text><rect x="721.9" y="760.5" width="27.6" height="13.3" fill="#fff" stroke="#8c8c8c" stroke-width="1.1"/><rect x="724.9" y="761.2" width="21.6" height="11.9" fill="#000" stroke="none" stroke-width="1"/><text x="724.3" y="756.7" font-size="9.3">TP40</text><rect x="688.5" y="773.7" width="19.8" height="19.5" fill="#fff" stroke="#666" stroke-width="1"/><circle cx="698.4" cy="783.5" r="9.8" fill="#000"/><text x="667.0" y="787.0" font-size="9.3">MH1</text><rect x="784.7" y="645.9" width="13.4" height="26.9" fill="#fff" stroke="#8c8c8c" stroke-width="1.1"/><rect x="785.4" y="648.9" width="12.0" height="20.9" fill="#000" stroke="none" stroke-width="1"/><text x="785.0" y="643.0" font-size="5.5" fill="#555">TP28</text><rect x="795.0" y="673.0" width="13.8" height="27.2" fill="#fff" stroke="#8c8c8c" stroke-width="1.1"/><rect x="795.7" y="676.0" width="12.4" height="21.2" fill="#000" stroke="none" stroke-width="1"/><text x="771.5" y="690.0" font-size="9.3">TP29</text><rect x="849.7" y="626.8" width="9.3" height="16.3" fill="#fff" stroke="#8c8c8c" stroke-width="1.2"/><rect x="851.2" y="628.5" width="6.3" height="5.7" fill="#000" stroke="none" stroke-width="1"/><rect x="851.2" y="635.8" width="6.3" height="5.7" fill="#000" stroke="none" stroke-width="1"/><text x="849.0" y="624.0" font-size="5.5" fill="#555">R28</text><rect x="847.1" y="648.8" width="14.3" height="27.7" fill="none" stroke="#444" stroke-width="1"/><circle cx="854.3" cy="655.6" r="4.5" fill="#000"/><rect x="850.0" y="665.0" width="9.0" height="8.6" fill="#000" stroke="none" stroke-width="1"/><text x="830.0" y="666.0" font-size="9.3">J10</text><rect x="916.7" y="638.8" width="13.8" height="27.0" fill="#fff" stroke="#8c8c8c" stroke-width="1.1"/><rect x="917.4" y="641.8" width="12.4" height="21.0" fill="#000" stroke="none" stroke-width="1"/><text x="917.0" y="636.0" font-size="5.5" fill="#555">TP27</text><rect x="927.8" y="666.1" width="13.2" height="27.4" fill="#fff" stroke="#8c8c8c" stroke-width="1.1"/><rect x="928.5" y="669.1" width="11.8" height="21.4" fill="#000" stroke="none" stroke-width="1"/><text x="903.4" y="683.0" font-size="9.3">TP25</text><rect x="951.8" y="641.8" width="13.7" height="27.3" fill="#fff" stroke="#8c8c8c" stroke-width="1.1"/><rect x="952.5" y="644.8" width="12.3" height="21.3" fill="#000" stroke="none" stroke-width="1"/><text x="952.0" y="639.0" font-size="5.5" fill="#555">TP23</text><rect x="950.7" y="682.5" width="9.6" height="15.9" fill="#fff" stroke="#8c8c8c" stroke-width="1.2"/><rect x="952.2" y="684.2" width="6.6" height="5.4" fill="#000" stroke="none" stroke-width="1"/><rect x="952.2" y="691.2" width="6.6" height="5.4" fill="#000" stroke="none" stroke-width="1"/><text x="951.0" y="680.0" font-size="5.5" fill="#555">R34</text><rect x="963.6" y="681.3" width="11.3" height="15.2" fill="#000" stroke="none" stroke-width="1"/><rect x="967.0" y="683.0" width="4.0" height="6.0" fill="#fff" stroke="none" stroke-width="1"/><text x="964.0" y="679.5" font-size="5.5" fill="#555">U24</text><rect x="972.8" y="774.1" width="13.5" height="27.4" fill="#fff" stroke="#8c8c8c" stroke-width="1.1"/><rect x="973.5" y="777.1" width="12.1" height="21.4" fill="#000" stroke="none" stroke-width="1"/><text x="973.0" y="771.0" font-size="5.5" fill="#555">TP21</text><rect x="1000.7" y="774.1" width="13.6" height="27.4" fill="#fff" stroke="#8c8c8c" stroke-width="1.1"/><rect x="1001.4" y="777.1" width="12.2" height="21.4" fill="#000" stroke="none" stroke-width="1"/><text x="1001.0" y="771.0" font-size="5.5" fill="#555">TP43</text><rect x="1018.1" y="774.1" width="13.4" height="27.4" fill="#fff" stroke="#8c8c8c" stroke-width="1.1"/><rect x="1018.8" y="777.1" width="12.0" height="21.4" fill="#000" stroke="none" stroke-width="1"/><text x="1018.0" y="771.5" font-size="9.3">TP3</text><circle cx="927.7" cy="497.3" r="8.3" fill="#000"/><circle cx="1000.0" cy="497.0" r="8.0" fill="#000"/><circle cx="1085.0" cy="470.0" r="6.0" fill="#000"/><circle cx="1094.4" cy="487.6" r="8.4" fill="#000"/><circle cx="1173.4" cy="470.0" r="6.0" fill="#000"/><circle cx="1164.2" cy="487.3" r="8.4" fill="#000"/><circle cx="1154.0" cy="495.3" r="6.2" fill="#000"/><circle cx="1180.0" cy="495.3" r="6.2" fill="#000"/><circle cx="1206.0" cy="495.0" r="6.2" fill="#000"/><circle cx="1313.0" cy="457.8" r="6.0" fill="#000"/><circle cx="1313.0" cy="488.0" r="6.0" fill="#000"/><circle cx="1098.6" cy="532.0" r="4.2" fill="#000"/><circle cx="1160.0" cy="532.0" r="4.2" fill="#000"/><circle cx="1101.3" cy="571.3" r="4.2" fill="#000"/><circle cx="1112.6" cy="571.3" r="4.2" fill="#000"/><circle cx="1096.0" cy="585.4" r="4.2" fill="#000"/><circle cx="1107.3" cy="585.4" r="4.2" fill="#000"/><circle cx="1118.2" cy="585.4" r="4.2" fill="#000"/><circle cx="1096.0" cy="599.2" r="4.2" fill="#000"/><circle cx="1109.7" cy="599.2" r="4.2" fill="#000"/><circle cx="1145.7" cy="571.3" r="4.2" fill="#000"/><circle cx="1157.0" cy="571.3" r="4.2" fill="#000"/><circle cx="1148.6" cy="599.0" r="4.2" fill="#000"/><circle cx="1163.3" cy="599.0" r="4.2" fill="#000"/><circle cx="1168.6" cy="599.0" r="4.2" fill="#000"/><circle cx="1181.3" cy="599.0" r="4.2" fill="#000"/><circle cx="1195.3" cy="599.0" r="4.2" fill="#000"/><circle cx="1209.3" cy="599.0" r="4.2" fill="#000"/><circle cx="1223.3" cy="599.0" r="4.2" fill="#000"/><circle cx="1167.3" cy="613.4" r="4.2" fill="#000"/><circle cx="1181.3" cy="613.4" r="4.2" fill="#000"/><circle cx="1195.3" cy="613.4" r="4.2" fill="#000"/><circle cx="1209.3" cy="613.4" r="4.2" fill="#000"/><circle cx="1223.3" cy="613.4" r="4.2" fill="#000"/><circle cx="1144.6" cy="638.3" r="5.0" fill="#000"/><circle cx="1176.6" cy="638.3" r="3.5" fill="#000"/></g></svg>
<div class="a" style="left:17px;top:814px;width:334px;height:162px;border:5px solid #ed1c24"></div>
</body></html>
